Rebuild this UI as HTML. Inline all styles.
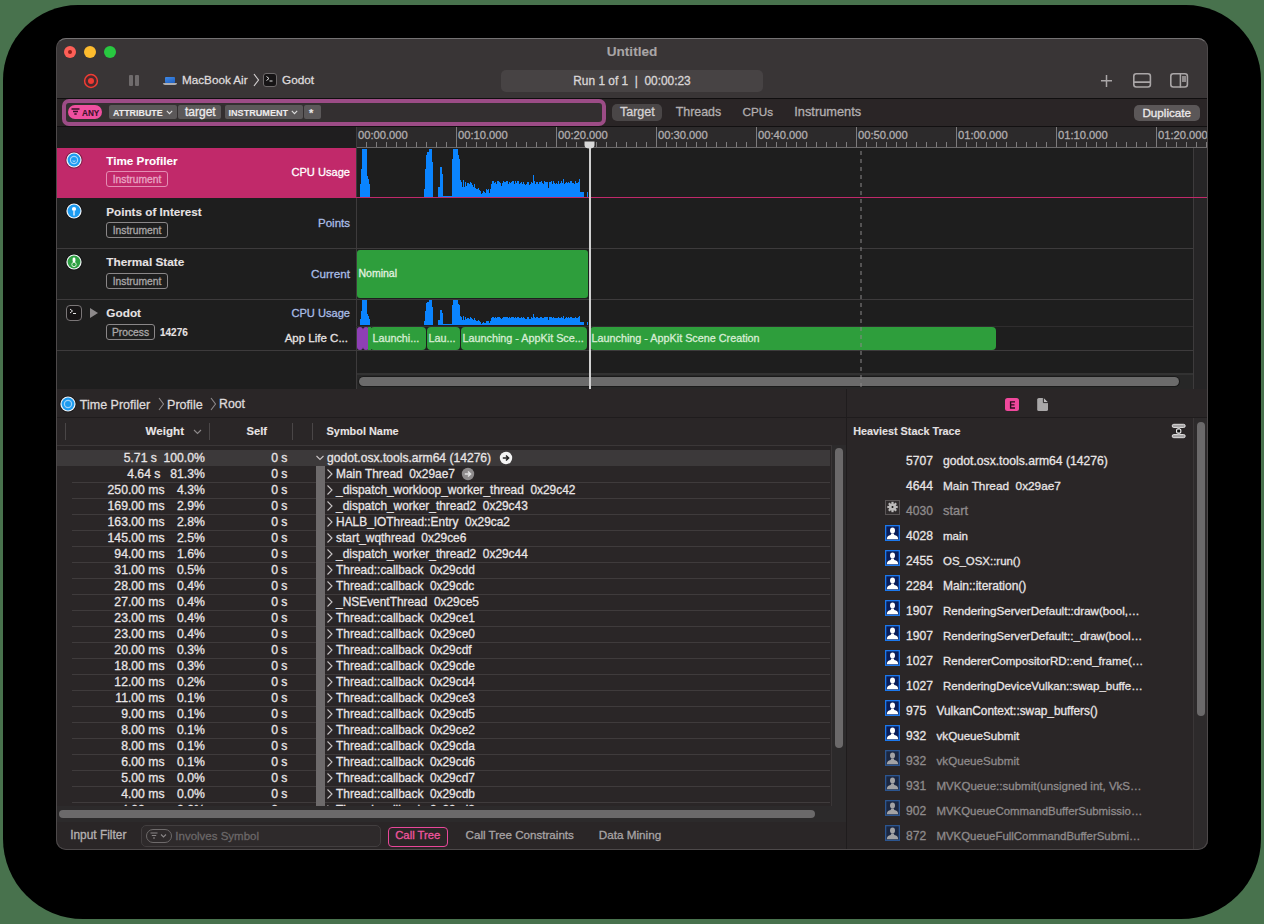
<!DOCTYPE html>
<html><head><meta charset="utf-8"><style>
html,body{margin:0;padding:0;}
body{width:1264px;height:924px;background:#48724d;position:relative;overflow:hidden;font-family:"Liberation Sans",sans-serif;}
.a{position:absolute;}
.t{white-space:pre;-webkit-text-stroke:0.3px currentColor;}
#shadow{position:absolute;left:3px;top:5px;width:1258px;height:914px;border-radius:75px 75px 80px 80px;background:#000;}
#win{position:absolute;left:56px;top:38px;width:1152px;height:812px;border-radius:10px;overflow:hidden;background:#2a2627;}
#winb{position:absolute;left:56px;top:38px;width:1152px;height:812px;border-radius:10px;box-sizing:border-box;border:1px solid #4d494a;border-top-color:#747273;pointer-events:none;}
</style></head><body>
<div id="shadow"></div>
<div id="win">
<div class="a" style="left:1px;top:0px;width:1151px;height:60px;background:#393536"></div>
<div class="a" style="left:1px;top:60px;width:1151px;height:1px;background:#100e0f"></div>
<div class="a" style="left:8px;top:8px;width:12px;height:12px;background:#fe5f57;border-radius:50%"></div>
<div class="a" style="left:28px;top:8px;width:12px;height:12px;background:#febc2e;border-radius:50%"></div>
<div class="a" style="left:48px;top:8px;width:12px;height:12px;background:#28c840;border-radius:50%"></div>
<div class="a" style="left:12px;top:12px;width:4px;height:4px;background:#8f1e18;border-radius:50%"></div>
<div class="a t" style="left:276px;width:600px;text-align:center;top:5.0px;font-size:13.6px;line-height:17px;color:#a9a5a6;font-weight:bold;-webkit-text-stroke:0.1px currentColor;">Untitled</div>
<svg class="a" style="left:27px;top:34.5px" width="16" height="16"><circle cx="8" cy="8" r="6.4" fill="#4a2a2e" stroke="#f03c34" stroke-width="1.5"/><circle cx="8" cy="8" r="3" fill="#ee3a33"/></svg>
<div class="a" style="left:73px;top:37px;width:4px;height:11px;background:#6f6b6c;border-radius:1px"></div>
<div class="a" style="left:79px;top:37px;width:4px;height:11px;background:#6f6b6c;border-radius:1px"></div>
<div class="a" style="left:108.80000000000001px;top:38.7px;width:10.5px;height:6.3px;background:linear-gradient(160deg,#3f8ae8,#1f5fc0);border-radius:1px"></div>
<div class="a" style="left:107px;top:45.2px;width:14px;height:1.8px;background:#aeacad;border-radius:0 0 2px 2px"></div>
<div class="a t" style="left:126px;top:34.0px;font-size:11.7px;line-height:15px;color:#dedadb;">MacBook Air</div>
<svg class="a" style="left:197px;top:35px" width="7" height="14"><path d="M1 1 L5.5 7 L1 13" stroke="#cfcbcc" stroke-width="1.2" fill="none"/></svg>
<div class="a" style="left:207px;top:35px;width:14px;height:14px;background:#161415;border:1px solid #6d696a;border-radius:3px;box-sizing:border-box"></div>
<svg class="a" style="left:209px;top:37px" width="10" height="10"><path d="M1.5 1.5 L4 3.5 L1.5 5.5" stroke="#ddd" stroke-width="1" fill="none"/><path d="M4.5 6 H7.5" stroke="#ddd" stroke-width="1"/></svg>
<div class="a t" style="left:226px;top:34.5px;font-size:11.8px;line-height:15px;color:#dedadb;">Godot</div>
<div class="a" style="left:445px;top:32px;width:262px;height:22px;background:#474344;border-radius:5px"></div>
<div class="a t" style="left:276px;width:600px;text-align:center;top:35.5px;font-size:11.9px;line-height:15px;color:#d9d5d6;">Run 1 of 1  |  00:00:23</div>
<svg class="a" style="left:1044px;top:36px" width="13" height="14"><path d="M6.5 1 V13 M1 6.7 H12" stroke="#aaa6a7" stroke-width="1.5"/></svg>
<svg class="a" style="left:1076px;top:34px" width="20" height="17"><rect x="1.8" y="1.8" width="16.6" height="13.2" rx="2.5" stroke="#aaa6a7" stroke-width="1.6" fill="none"/><path d="M1.5 10.1 H18.5" stroke="#aaa6a7" stroke-width="1.7"/></svg>
<svg class="a" style="left:1113px;top:34px" width="20" height="17"><rect x="1.8" y="1.8" width="16.6" height="13.2" rx="2.5" stroke="#aaa6a7" stroke-width="1.6" fill="none"/><path d="M11.4 1.5 V15.5" stroke="#aaa6a7" stroke-width="1.5"/><rect x="13" y="4" width="4" height="6" fill="#8e8a8b"/></svg>
<div class="a" style="left:1px;top:61px;width:1151px;height:27px;background:#2a2526"></div>
<div class="a" style="left:6px;top:61px;width:544px;height:27px;background:#332f30;border:4px solid #9c4c86;border-radius:7px;box-sizing:border-box"></div>
<div class="a" style="left:12px;top:67px;width:34px;height:14px;background:#ef4f9f;border-radius:7px"></div>
<svg class="a" style="left:15px;top:70px" width="9" height="8"><path d="M0.5 1 H8.5 M2 3.5 H7 M3.3 6 H5.7" stroke="#3a1228" stroke-width="1.3"/></svg>
<div class="a t" style="left:26px;top:70.5px;font-size:8.2px;line-height:10px;color:#3a1228;font-weight:bold;-webkit-text-stroke:0.1px currentColor;">ANY</div>
<div class="a" style="left:53px;top:67px;width:68px;height:14px;background:#5b5859;border-radius:2px"></div>
<div class="a t" style="left:57px;top:69.5px;font-size:8.9px;line-height:11px;color:#ecebeb;font-weight:bold;-webkit-text-stroke:0.1px currentColor;">ATTRIBUTE</div>
<svg class="a" style="left:110px;top:72px" width="7" height="5"><path d="M0.8 0.8 L3.5 3.6 L6.2 0.8" stroke="#ddd" stroke-width="1.1" fill="none"/></svg>
<div class="a" style="left:122px;top:67px;width:43px;height:14px;background:#5b5859;border-radius:2px"></div>
<div class="a t" style="left:129px;top:66.5px;font-size:12px;line-height:15px;color:#ecebeb;">target</div>
<div class="a" style="left:169px;top:67px;width:78px;height:14px;background:#5b5859;border-radius:2px"></div>
<div class="a t" style="left:172.5px;top:69.5px;font-size:9.1px;line-height:11px;color:#ecebeb;font-weight:bold;-webkit-text-stroke:0.1px currentColor;">INSTRUMENT</div>
<svg class="a" style="left:235px;top:72px" width="7" height="5"><path d="M0.8 0.8 L3.5 3.6 L6.2 0.8" stroke="#ddd" stroke-width="1.1" fill="none"/></svg>
<div class="a" style="left:248px;top:67px;width:17px;height:14px;background:#5b5859;border-radius:2px"></div>
<div class="a t" style="left:253px;top:68.0px;font-size:11px;line-height:14px;color:#ecebeb;font-weight:bold;-webkit-text-stroke:0.1px currentColor;">*</div>
<div class="a" style="left:556px;top:66px;width:50px;height:17px;background:#4a4647;border-radius:5px"></div>
<div class="a t" style="left:564px;top:66.3px;font-size:12.5px;line-height:16px;color:#d6d2d3;">Target</div>
<div class="a t" style="left:619.7px;top:66.3px;font-size:12.4px;line-height:16px;color:#b3afb0;">Threads</div>
<div class="a t" style="left:686.5px;top:66.3px;font-size:11.7px;line-height:15px;color:#b3afb0;">CPUs</div>
<div class="a t" style="left:738.3px;top:65.8px;font-size:12.8px;line-height:16px;color:#b3afb0;">Instruments</div>
<div class="a" style="left:1078px;top:67px;width:66px;height:16px;background:#5b5758;border-radius:5px"></div>
<div class="a t" style="left:1086.4px;top:67.0px;font-size:11.7px;line-height:15px;color:#eeeaeb;">Duplicate</div>
<div class="a" style="left:1px;top:88px;width:1151px;height:1px;background:#121011"></div>
<div class="a" style="left:1px;top:89px;width:299px;height:21px;background:#1f1e1f"></div>
<div class="a" style="left:300px;top:89px;width:851px;height:20px;background:#2c2a2b"></div>
<div class="a" style="left:300px;top:109px;width:851px;height:1px;background:#6c6a6b"></div>
<svg class="a" style="left:300px;top:89px" width="851" height="20"><path d="M0.5 0 V20 M10.5 15 V20 M20.5 15 V20 M30.5 15 V20 M40.5 15 V20 M50.5 15 V20 M60.5 15 V20 M70.5 15 V20 M80.5 15 V20 M90.5 15 V20 M100.5 0 V20 M110.5 15 V20 M120.5 15 V20 M130.5 15 V20 M140.5 15 V20 M150.5 15 V20 M160.5 15 V20 M170.5 15 V20 M180.5 15 V20 M190.5 15 V20 M200.5 0 V20 M210.5 15 V20 M220.5 15 V20 M230.5 15 V20 M240.5 15 V20 M250.5 15 V20 M260.5 15 V20 M270.5 15 V20 M280.5 15 V20 M290.5 15 V20 M300.5 0 V20 M310.5 15 V20 M320.5 15 V20 M330.5 15 V20 M340.5 15 V20 M350.5 15 V20 M360.5 15 V20 M370.5 15 V20 M380.5 15 V20 M390.5 15 V20 M400.5 0 V20 M410.5 15 V20 M420.5 15 V20 M430.5 15 V20 M440.5 15 V20 M450.5 15 V20 M460.5 15 V20 M470.5 15 V20 M480.5 15 V20 M490.5 15 V20 M500.5 0 V20 M510.5 15 V20 M520.5 15 V20 M530.5 15 V20 M540.5 15 V20 M550.5 15 V20 M560.5 15 V20 M570.5 15 V20 M580.5 15 V20 M590.5 15 V20 M600.5 0 V20 M610.5 15 V20 M620.5 15 V20 M630.5 15 V20 M640.5 15 V20 M650.5 15 V20 M660.5 15 V20 M670.5 15 V20 M680.5 15 V20 M690.5 15 V20 M700.5 0 V20 M710.5 15 V20 M720.5 15 V20 M730.5 15 V20 M740.5 15 V20 M750.5 15 V20 M760.5 15 V20 M770.5 15 V20 M780.5 15 V20 M790.5 15 V20 M800.5 0 V20 M810.5 15 V20 M820.5 15 V20 M830.5 15 V20 M840.5 15 V20 M850.5 15 V20" stroke="#7d7b7c" stroke-width="1"/></svg>
<div class="a t" style="left:302px;top:90.0px;font-size:11.2px;line-height:14px;color:#b1adae;">00:00.000</div>
<div class="a t" style="left:402px;top:90.0px;font-size:11.2px;line-height:14px;color:#b1adae;">00:10.000</div>
<div class="a t" style="left:502px;top:90.0px;font-size:11.2px;line-height:14px;color:#b1adae;">00:20.000</div>
<div class="a t" style="left:602px;top:90.0px;font-size:11.2px;line-height:14px;color:#b1adae;">00:30.000</div>
<div class="a t" style="left:702px;top:90.0px;font-size:11.2px;line-height:14px;color:#b1adae;">00:40.000</div>
<div class="a t" style="left:802px;top:90.0px;font-size:11.2px;line-height:14px;color:#b1adae;">00:50.000</div>
<div class="a t" style="left:902px;top:90.0px;font-size:11.2px;line-height:14px;color:#b1adae;">01:00.000</div>
<div class="a t" style="left:1002px;top:90.0px;font-size:11.2px;line-height:14px;color:#b1adae;">01:10.000</div>
<div class="a t" style="left:1102px;top:90.0px;font-size:11.2px;line-height:14px;color:#b1adae;">01:20.000</div>
<div class="a" style="left:1px;top:110px;width:1151px;height:241px;background:#1e1e1e"></div>
<div class="a" style="left:1137px;top:110px;width:14px;height:241px;background:#262526"></div>
<div class="a" style="left:1136.5px;top:110px;width:1px;height:241px;background:#3d3b3c"></div>
<div class="a" style="left:300px;top:89px;width:1px;height:262px;background:#3d3b3c"></div>
<div class="a" style="left:1px;top:110px;width:299px;height:49px;background:#c1296a"></div>
<div class="a" style="left:1px;top:159px;width:1151px;height:1px;background:#c1296a"></div>
<div class="a" style="left:1px;top:210px;width:1136px;height:1px;background:#3d3b3c"></div>
<div class="a" style="left:1px;top:261px;width:1136px;height:1px;background:#3d3b3c"></div>
<div class="a" style="left:1px;top:312px;width:1136px;height:1px;background:#3d3b3c"></div>
<div class="a" style="left:300px;top:287.5px;width:837px;height:1px;background:#2f2d2e"></div>
<svg class="a" style="left:9px;top:112.69999999999999px" width="18" height="18"><circle cx="9" cy="9" r="8.6" fill="#000" opacity="0.35"/><circle cx="9" cy="9" r="7.6" fill="#f2f4f8"/><circle cx="9" cy="9" r="6.4" fill="#1d9bf0"/><circle cx="9" cy="9" r="3.6" fill="none" stroke="#9fd3fa" stroke-width="1.2"/><path d="M7.6 9.8 Q9 11 10.4 9.8" stroke="#cfe9fc" stroke-width="0.9" fill="none"/></svg>
<svg class="a" style="left:9px;top:163.8px" width="18" height="18"><circle cx="9" cy="9" r="8.6" fill="#000" opacity="0.35"/><circle cx="9" cy="9" r="7.6" fill="#f2f4f8"/><circle cx="9" cy="9" r="6.4" fill="#1d9bf0"/><circle cx="9" cy="7" r="2.1" fill="#fff"/><path d="M9 8 V13.5" stroke="#cfe6fb" stroke-width="1.6"/></svg>
<svg class="a" style="left:9px;top:214.60000000000002px" width="18" height="18"><circle cx="9" cy="9" r="8.6" fill="#000" opacity="0.35"/><circle cx="9" cy="9" r="7.6" fill="#f2f4f8"/><circle cx="9" cy="9" r="6.4" fill="#2ea043"/><rect x="7.6" y="4.5" width="2.8" height="5" rx="1.4" fill="#fff"/><circle cx="9" cy="11.5" r="2.2" fill="none" stroke="#d5f0d8" stroke-width="1"/></svg>
<div class="a" style="left:10px;top:267px;width:16px;height:16px;background:#161415;border:1px solid #7a7677;border-radius:4px;box-sizing:border-box"></div>
<svg class="a" style="left:12px;top:269px" width="12" height="12"><path d="M2 2 L4.5 4 L2 6" stroke="#e5e5e5" stroke-width="1" fill="none"/><path d="M5 6.5 H8" stroke="#e5e5e5" stroke-width="1"/></svg>
<svg class="a" style="left:33px;top:269px" width="10" height="12"><path d="M1 1 L9 6 L1 11 Z" fill="#8c898a"/></svg>
<div class="a t" style="left:50.3px;top:114.5px;font-size:11.7px;line-height:15px;color:#ffffff;font-weight:bold;-webkit-text-stroke:0.1px currentColor;">Time Profiler</div>
<div class="a" style="left:50px;top:133px;width:62px;height:16px;border:1px solid #e48db3;border-radius:3px;box-sizing:border-box;background:transparent"></div>
<div class="a t" style="left:-219.0px;width:600px;text-align:center;top:135.0px;font-size:10.3px;line-height:13px;color:#e9a6c4;">Instrument</div>
<div class="a t" style="left:-306px;width:600px;text-align:right;top:127.3px;font-size:11.1px;line-height:14px;color:#ffffff;">CPU Usage</div>
<div class="a t" style="left:50.3px;top:165.5px;font-size:11.7px;line-height:15px;color:#e6e2e3;font-weight:bold;-webkit-text-stroke:0.1px currentColor;">Points of Interest</div>
<div class="a" style="left:50px;top:184px;width:62px;height:16px;border:1px solid #8a8788;border-radius:3px;box-sizing:border-box;background:transparent"></div>
<div class="a t" style="left:-219.0px;width:600px;text-align:center;top:186.0px;font-size:10.3px;line-height:13px;color:#a9a6a7;">Instrument</div>
<div class="a t" style="left:-306px;width:600px;text-align:right;top:178.3px;font-size:11.5px;line-height:14px;color:#a9bde6;">Points</div>
<div class="a t" style="left:50.3px;top:217.0px;font-size:11.8px;line-height:15px;color:#e6e2e3;font-weight:bold;-webkit-text-stroke:0.1px currentColor;">Thermal State</div>
<div class="a" style="left:50px;top:235px;width:62px;height:16px;border:1px solid #8a8788;border-radius:3px;box-sizing:border-box;background:transparent"></div>
<div class="a t" style="left:-219.0px;width:600px;text-align:center;top:237.0px;font-size:10.3px;line-height:13px;color:#a9a6a7;">Instrument</div>
<div class="a t" style="left:-306px;width:600px;text-align:right;top:228.3px;font-size:11.7px;line-height:15px;color:#a9bde6;">Current</div>
<div class="a t" style="left:50.3px;top:267.5px;font-size:11.8px;line-height:15px;color:#e6e2e3;font-weight:bold;-webkit-text-stroke:0.1px currentColor;">Godot</div>
<div class="a" style="left:50px;top:286px;width:49px;height:16px;border:1px solid #8a8788;border-radius:3px;box-sizing:border-box;background:transparent"></div>
<div class="a t" style="left:-225.5px;width:600px;text-align:center;top:288.0px;font-size:10.3px;line-height:13px;color:#a9a6a7;">Process</div>
<div class="a t" style="left:104px;top:288.5px;font-size:10px;line-height:12px;color:#e6e2e3;font-weight:bold;-webkit-text-stroke:0.1px currentColor;">14276</div>
<div class="a t" style="left:-306px;width:600px;text-align:right;top:267.6px;font-size:11.1px;line-height:14px;color:#a9bde6;">CPU Usage</div>
<div class="a t" style="left:-308px;width:600px;text-align:right;top:293.0px;font-size:11.5px;line-height:14px;color:#e6e2e3;">App Life C...</div>
<svg class="a" style="left:0;top:0" width="1151" height="811"><path d="M304.0 159.00 v-12.61 h0.5 v12.61z M304.5 159.00 v-27.64 h0.5 v27.64z M305.0 159.00 v-27.64 h0.5 v27.64z M305.5 159.00 v-48.02 h0.5 v48.02z M306.0 159.00 v-48.02 h0.5 v48.02z M306.5 159.00 v-48.02 h0.5 v48.02z M307.0 159.00 v-48.02 h0.5 v48.02z M307.5 159.00 v-48.02 h0.5 v48.02z M308.0 159.00 v-48.02 h0.5 v48.02z M308.5 159.00 v-48.02 h0.5 v48.02z M309.0 159.00 v-48.02 h0.5 v48.02z M309.5 159.00 v-48.02 h0.5 v48.02z M310.0 159.00 v-48.02 h0.5 v48.02z M310.5 159.00 v-48.02 h0.5 v48.02z M311.0 159.00 v-20.86 h0.5 v20.86z M311.5 159.00 v-20.86 h0.5 v20.86z M312.0 159.00 v-17.95 h0.5 v17.95z M312.5 159.00 v-17.95 h0.5 v17.95z M313.0 159.00 v-12.61 h0.5 v12.61z M313.5 159.00 v-12.61 h0.5 v12.61z M368.0 159.00 v-8.25 h0.5 v8.25z M368.5 159.00 v-8.25 h0.5 v8.25z M369.0 159.00 v-27.64 h0.5 v27.64z M369.5 159.00 v-27.64 h0.5 v27.64z M370.0 159.00 v-42.20 h0.5 v42.20z M370.5 159.00 v-42.20 h0.5 v42.20z M371.0 159.00 v-44.62 h0.5 v44.62z M371.5 159.00 v-44.62 h0.5 v44.62z M372.0 159.00 v-44.62 h0.5 v44.62z M372.5 159.00 v-44.62 h0.5 v44.62z M373.0 159.00 v-48.02 h0.5 v48.02z M373.5 159.00 v-48.02 h0.5 v48.02z M374.0 159.00 v-48.02 h0.5 v48.02z M374.5 159.00 v-48.02 h0.5 v48.02z M375.0 159.00 v-48.02 h0.5 v48.02z M375.5 159.00 v-48.02 h0.5 v48.02z M376.0 159.00 v-35.41 h0.5 v35.41z M376.5 159.00 v-35.41 h0.5 v35.41z M382.0 159.00 v-9.70 h0.5 v9.70z M382.5 159.00 v-9.70 h0.5 v9.70z M383.0 159.00 v-9.70 h0.5 v9.70z M383.5 159.00 v-29.59 h0.5 v29.59z M384.0 159.00 v-29.59 h0.5 v29.59z M384.5 159.00 v-29.59 h0.5 v29.59z M385.0 159.00 v-29.59 h0.5 v29.59z M385.5 159.00 v-22.79 h0.5 v22.79z M386.0 159.00 v-22.79 h0.5 v22.79z M386.5 159.00 v-1.45 h0.5 v1.45z M387.0 159.00 v-1.45 h0.5 v1.45z M387.5 159.00 v-1.45 h0.5 v1.45z M388.0 159.00 v-1.45 h0.5 v1.45z M388.5 159.00 v-1.45 h0.5 v1.45z M389.0 159.00 v-1.45 h0.5 v1.45z M389.5 159.00 v-1.45 h0.5 v1.45z M390.0 159.00 v-1.45 h0.5 v1.45z M390.5 159.00 v-1.45 h0.5 v1.45z M391.0 159.00 v-1.45 h0.5 v1.45z M391.5 159.00 v-1.45 h0.5 v1.45z M392.0 159.00 v-1.45 h0.5 v1.45z M392.5 159.00 v-1.45 h0.5 v1.45z M393.0 159.00 v-1.45 h0.5 v1.45z M393.5 159.00 v-1.45 h0.5 v1.45z M394.0 159.00 v-1.45 h0.5 v1.45z M394.5 159.00 v-1.45 h0.5 v1.45z M395.0 159.00 v-1.45 h0.5 v1.45z M395.5 159.00 v-38.32 h0.5 v38.32z M396.0 159.00 v-38.32 h0.5 v38.32z M396.5 159.00 v-38.32 h0.5 v38.32z M397.0 159.00 v-48.50 h0.5 v48.50z M397.5 159.00 v-48.50 h0.5 v48.50z M398.0 159.00 v-48.50 h0.5 v48.50z M398.5 159.00 v-48.50 h0.5 v48.50z M399.0 159.00 v-48.50 h0.5 v48.50z M399.5 159.00 v-48.50 h0.5 v48.50z M400.0 159.00 v-48.50 h0.5 v48.50z M400.5 159.00 v-48.50 h0.5 v48.50z M401.0 159.00 v-48.50 h0.5 v48.50z M401.5 159.00 v-48.50 h0.5 v48.50z M402.0 159.00 v-41.71 h0.5 v41.71z M402.5 159.00 v-41.71 h0.5 v41.71z M403.0 159.00 v-38.32 h0.5 v38.32z M403.5 159.00 v-38.32 h0.5 v38.32z M404.0 159.00 v-16.97 h0.5 v16.97z M404.5 159.00 v-16.97 h0.5 v16.97z M405.0 159.00 v-15.32 h0.5 v15.32z M405.5 159.00 v-14.35 h0.5 v14.35z M406.0 159.00 v-10.39 h0.5 v10.39z M406.5 159.00 v-14.34 h0.5 v14.34z M407.0 159.00 v-17.27 h0.5 v17.27z M407.5 159.00 v-16.50 h0.5 v16.50z M408.0 159.00 v-10.26 h0.5 v10.26z M408.5 159.00 v-15.19 h0.5 v15.19z M409.0 159.00 v-15.26 h0.5 v15.26z M409.5 159.00 v-16.32 h0.5 v16.32z M410.0 159.00 v-11.13 h0.5 v11.13z M410.5 159.00 v-14.76 h0.5 v14.76z M411.0 159.00 v-14.40 h0.5 v14.40z M411.5 159.00 v-15.21 h0.5 v15.21z M412.0 159.00 v-14.35 h0.5 v14.35z M412.5 159.00 v-14.96 h0.5 v14.96z M413.0 159.00 v-12.58 h0.5 v12.58z M413.5 159.00 v-8.02 h0.5 v8.02z M414.0 159.00 v-15.09 h0.5 v15.09z M414.5 159.00 v-13.34 h0.5 v13.34z M415.0 159.00 v-14.37 h0.5 v14.37z M415.5 159.00 v-15.79 h0.5 v15.79z M416.0 159.00 v-12.36 h0.5 v12.36z M416.5 159.00 v-15.98 h0.5 v15.98z M417.0 159.00 v-9.63 h0.5 v9.63z M417.5 159.00 v-7.74 h0.5 v7.74z M418.0 159.00 v-12.63 h0.5 v12.63z M418.5 159.00 v-10.17 h0.5 v10.17z M419.0 159.00 v-8.92 h0.5 v8.92z M419.5 159.00 v-10.14 h0.5 v10.14z M420.0 159.00 v-8.18 h0.5 v8.18z M420.5 159.00 v-7.38 h0.5 v7.38z M421.0 159.00 v-7.70 h0.5 v7.70z M421.5 159.00 v-10.08 h0.5 v10.08z M422.0 159.00 v-8.99 h0.5 v8.99z M422.5 159.00 v-8.79 h0.5 v8.79z M423.0 159.00 v-7.00 h0.5 v7.00z M423.5 159.00 v-10.18 h0.5 v10.18z M424.0 159.00 v-5.91 h0.5 v5.91z M424.5 159.00 v-4.61 h0.5 v4.61z M425.0 159.00 v-2.57 h0.5 v2.57z M425.5 159.00 v-4.95 h0.5 v4.95z M426.0 159.00 v-4.46 h0.5 v4.46z M426.5 159.00 v-4.94 h0.5 v4.94z M427.0 159.00 v-5.78 h0.5 v5.78z M427.5 159.00 v-8.22 h0.5 v8.22z M428.0 159.00 v-4.70 h0.5 v4.70z M428.5 159.00 v-5.39 h0.5 v5.39z M429.0 159.00 v-4.45 h0.5 v4.45z M429.5 159.00 v-2.43 h0.5 v2.43z M430.0 159.00 v-8.16 h0.5 v8.16z M430.5 159.00 v-5.38 h0.5 v5.38z M431.0 159.00 v-7.36 h0.5 v7.36z M431.5 159.00 v-5.64 h0.5 v5.64z M432.0 159.00 v-8.19 h0.5 v8.19z M432.5 159.00 v-7.54 h0.5 v7.54z M433.0 159.00 v-3.85 h0.5 v3.85z M433.5 159.00 v-5.45 h0.5 v5.45z M434.0 159.00 v-8.08 h0.5 v8.08z M434.5 159.00 v-16.44 h0.5 v16.44z M435.0 159.00 v-13.47 h0.5 v13.47z M435.5 159.00 v-13.40 h0.5 v13.40z M436.0 159.00 v-15.87 h0.5 v15.87z M436.5 159.00 v-15.71 h0.5 v15.71z M437.0 159.00 v-16.14 h0.5 v16.14z M437.5 159.00 v-14.46 h0.5 v14.46z M438.0 159.00 v-13.90 h0.5 v13.90z M438.5 159.00 v-14.15 h0.5 v14.15z M439.0 159.00 v-15.42 h0.5 v15.42z M439.5 159.00 v-13.20 h0.5 v13.20z M440.0 159.00 v-13.18 h0.5 v13.18z M440.5 159.00 v-15.16 h0.5 v15.16z M441.0 159.00 v-16.46 h0.5 v16.46z M441.5 159.00 v-14.65 h0.5 v14.65z M442.0 159.00 v-15.99 h0.5 v15.99z M442.5 159.00 v-13.59 h0.5 v13.59z M443.0 159.00 v-14.89 h0.5 v14.89z M443.5 159.00 v-13.12 h0.5 v13.12z M444.0 159.00 v-14.39 h0.5 v14.39z M444.5 159.00 v-14.24 h0.5 v14.24z M445.0 159.00 v-10.75 h0.5 v10.75z M445.5 159.00 v-16.33 h0.5 v16.33z M446.0 159.00 v-14.45 h0.5 v14.45z M446.5 159.00 v-13.87 h0.5 v13.87z M447.0 159.00 v-15.65 h0.5 v15.65z M447.5 159.00 v-13.57 h0.5 v13.57z M448.0 159.00 v-14.58 h0.5 v14.58z M448.5 159.00 v-16.15 h0.5 v16.15z M449.0 159.00 v-14.57 h0.5 v14.57z M449.5 159.00 v-14.37 h0.5 v14.37z M450.0 159.00 v-16.26 h0.5 v16.26z M450.5 159.00 v-16.27 h0.5 v16.27z M451.0 159.00 v-16.27 h0.5 v16.27z M451.5 159.00 v-9.84 h0.5 v9.84z M452.0 159.00 v-12.89 h0.5 v12.89z M452.5 159.00 v-16.09 h0.5 v16.09z M453.0 159.00 v-15.17 h0.5 v15.17z M453.5 159.00 v-16.36 h0.5 v16.36z M454.0 159.00 v-14.16 h0.5 v14.16z M454.5 159.00 v-15.84 h0.5 v15.84z M455.0 159.00 v-14.61 h0.5 v14.61z M455.5 159.00 v-9.54 h0.5 v9.54z M456.0 159.00 v-16.42 h0.5 v16.42z M456.5 159.00 v-14.60 h0.5 v14.60z M457.0 159.00 v-15.67 h0.5 v15.67z M457.5 159.00 v-16.61 h0.5 v16.61z M458.0 159.00 v-13.11 h0.5 v13.11z M458.5 159.00 v-15.79 h0.5 v15.79z M459.0 159.00 v-16.18 h0.5 v16.18z M459.5 159.00 v-12.96 h0.5 v12.96z M460.0 159.00 v-14.26 h0.5 v14.26z M460.5 159.00 v-15.07 h0.5 v15.07z M461.0 159.00 v-15.93 h0.5 v15.93z M461.5 159.00 v-14.37 h0.5 v14.37z M462.0 159.00 v-16.21 h0.5 v16.21z M462.5 159.00 v-14.65 h0.5 v14.65z M463.0 159.00 v-13.24 h0.5 v13.24z M463.5 159.00 v-13.82 h0.5 v13.82z M464.0 159.00 v-13.74 h0.5 v13.74z M464.5 159.00 v-10.98 h0.5 v10.98z M465.0 159.00 v-14.75 h0.5 v14.75z M465.5 159.00 v-15.27 h0.5 v15.27z M466.0 159.00 v-13.32 h0.5 v13.32z M466.5 159.00 v-13.17 h0.5 v13.17z M467.0 159.00 v-15.45 h0.5 v15.45z M467.5 159.00 v-14.38 h0.5 v14.38z M468.0 159.00 v-12.99 h0.5 v12.99z M468.5 159.00 v-11.91 h0.5 v11.91z M469.0 159.00 v-12.27 h0.5 v12.27z M469.5 159.00 v-15.02 h0.5 v15.02z M470.0 159.00 v-12.58 h0.5 v12.58z M470.5 159.00 v-12.25 h0.5 v12.25z M471.0 159.00 v-15.37 h0.5 v15.37z M471.5 159.00 v-12.59 h0.5 v12.59z M472.0 159.00 v-15.22 h0.5 v15.22z M472.5 159.00 v-13.59 h0.5 v13.59z M473.0 159.00 v-11.66 h0.5 v11.66z M473.5 159.00 v-9.73 h0.5 v9.73z M474.0 159.00 v-12.54 h0.5 v12.54z M474.5 159.00 v-14.55 h0.5 v14.55z M475.0 159.00 v-15.05 h0.5 v15.05z M475.5 159.00 v-15.46 h0.5 v15.46z M476.0 159.00 v-14.14 h0.5 v14.14z M476.5 159.00 v-21.89 h0.5 v21.89z M477.0 159.00 v-21.58 h0.5 v21.58z M477.5 159.00 v-20.39 h0.5 v20.39z M478.0 159.00 v-15.82 h0.5 v15.82z M478.5 159.00 v-15.26 h0.5 v15.26z M479.0 159.00 v-12.73 h0.5 v12.73z M479.5 159.00 v-13.02 h0.5 v13.02z M480.0 159.00 v-15.05 h0.5 v15.05z M480.5 159.00 v-17.51 h0.5 v17.51z M481.0 159.00 v-14.56 h0.5 v14.56z M481.5 159.00 v-12.87 h0.5 v12.87z M482.0 159.00 v-12.90 h0.5 v12.90z M482.5 159.00 v-13.41 h0.5 v13.41z M483.0 159.00 v-14.53 h0.5 v14.53z M483.5 159.00 v-15.26 h0.5 v15.26z M484.0 159.00 v-15.10 h0.5 v15.10z M484.5 159.00 v-13.60 h0.5 v13.60z M485.0 159.00 v-16.39 h0.5 v16.39z M485.5 159.00 v-15.22 h0.5 v15.22z M486.0 159.00 v-13.74 h0.5 v13.74z M486.5 159.00 v-14.42 h0.5 v14.42z M487.0 159.00 v-13.38 h0.5 v13.38z M487.5 159.00 v-12.68 h0.5 v12.68z M488.0 159.00 v-16.37 h0.5 v16.37z M488.5 159.00 v-13.42 h0.5 v13.42z M489.0 159.00 v-14.87 h0.5 v14.87z M489.5 159.00 v-16.31 h0.5 v16.31z M490.0 159.00 v-14.58 h0.5 v14.58z M490.5 159.00 v-13.51 h0.5 v13.51z M491.0 159.00 v-15.12 h0.5 v15.12z M491.5 159.00 v-13.78 h0.5 v13.78z M492.0 159.00 v-8.86 h0.5 v8.86z M492.5 159.00 v-15.87 h0.5 v15.87z M493.0 159.00 v-15.38 h0.5 v15.38z M493.5 159.00 v-14.05 h0.5 v14.05z M494.0 159.00 v-14.90 h0.5 v14.90z M494.5 159.00 v-13.68 h0.5 v13.68z M495.0 159.00 v-15.85 h0.5 v15.85z M495.5 159.00 v-13.58 h0.5 v13.58z M496.0 159.00 v-13.35 h0.5 v13.35z M496.5 159.00 v-16.04 h0.5 v16.04z M497.0 159.00 v-16.15 h0.5 v16.15z M497.5 159.00 v-15.40 h0.5 v15.40z M498.0 159.00 v-14.36 h0.5 v14.36z M498.5 159.00 v-13.72 h0.5 v13.72z M499.0 159.00 v-13.10 h0.5 v13.10z M499.5 159.00 v-13.77 h0.5 v13.77z M500.0 159.00 v-13.62 h0.5 v13.62z M500.5 159.00 v-14.77 h0.5 v14.77z M501.0 159.00 v-13.24 h0.5 v13.24z M501.5 159.00 v-14.54 h0.5 v14.54z M502.0 159.00 v-16.48 h0.5 v16.48z M502.5 159.00 v-13.36 h0.5 v13.36z M503.0 159.00 v-12.96 h0.5 v12.96z M503.5 159.00 v-14.82 h0.5 v14.82z M504.0 159.00 v-14.21 h0.5 v14.21z M504.5 159.00 v-10.71 h0.5 v10.71z M505.0 159.00 v-16.36 h0.5 v16.36z M505.5 159.00 v-15.05 h0.5 v15.05z M506.0 159.00 v-13.66 h0.5 v13.66z M506.5 159.00 v-14.34 h0.5 v14.34z M507.0 159.00 v-17.51 h0.5 v17.51z M507.5 159.00 v-16.09 h0.5 v16.09z M508.0 159.00 v-12.61 h0.5 v12.61z M508.5 159.00 v-15.81 h0.5 v15.81z M509.0 159.00 v-13.57 h0.5 v13.57z M509.5 159.00 v-14.64 h0.5 v14.64z M510.0 159.00 v-15.41 h0.5 v15.41z M510.5 159.00 v-9.30 h0.5 v9.30z M511.0 159.00 v-13.51 h0.5 v13.51z M511.5 159.00 v-13.79 h0.5 v13.79z M512.0 159.00 v-15.08 h0.5 v15.08z M512.5 159.00 v-12.88 h0.5 v12.88z M513.0 159.00 v-14.12 h0.5 v14.12z M513.5 159.00 v-12.65 h0.5 v12.65z M514.0 159.00 v-16.33 h0.5 v16.33z M514.5 159.00 v-14.45 h0.5 v14.45z M515.0 159.00 v-16.34 h0.5 v16.34z M515.5 159.00 v-12.69 h0.5 v12.69z M516.0 159.00 v-14.24 h0.5 v14.24z M516.5 159.00 v-12.63 h0.5 v12.63z M517.0 159.00 v-14.24 h0.5 v14.24z M517.5 159.00 v-15.70 h0.5 v15.70z M518.0 159.00 v-13.41 h0.5 v13.41z M518.5 159.00 v-15.79 h0.5 v15.79z M519.0 159.00 v-15.56 h0.5 v15.56z M519.5 159.00 v-14.53 h0.5 v14.53z M520.0 159.00 v-14.23 h0.5 v14.23z M520.5 159.00 v-13.18 h0.5 v13.18z M521.0 159.00 v-13.76 h0.5 v13.76z M521.5 159.00 v-14.14 h0.5 v14.14z M522.0 159.00 v-15.45 h0.5 v15.45z M522.5 159.00 v-13.89 h0.5 v13.89z M523.0 159.00 v-18.25 h0.5 v18.25z M523.5 159.00 v-5.33 h0.5 v5.33z M524.0 159.00 v-5.33 h0.5 v5.33z M524.5 159.00 v-5.33 h0.5 v5.33z M525.0 159.00 v-5.33 h0.5 v5.33z M525.5 159.00 v-5.33 h0.5 v5.33z M526.0 159.00 v-5.33 h0.5 v5.33z M526.5 159.00 v-5.33 h0.5 v5.33z M527.0 159.00 v-5.33 h0.5 v5.33z M527.5 159.00 v-5.33 h0.5 v5.33z M530.5 159.00 v-5.33 h0.5 v5.33z M531.0 159.00 v-5.33 h0.5 v5.33z M531.5 159.00 v-5.33 h0.5 v5.33z" fill="#0a84ff" stroke="none" shape-rendering="crispEdges"/></svg>
<svg class="a" style="left:0;top:0" width="1151" height="811"><path d="M304.0 287.00 v-6.50 h0.5 v6.50z M304.5 287.00 v-14.25 h0.5 v14.25z M305.0 287.00 v-14.25 h0.5 v14.25z M305.5 287.00 v-24.75 h0.5 v24.75z M306.0 287.00 v-24.75 h0.5 v24.75z M306.5 287.00 v-24.75 h0.5 v24.75z M307.0 287.00 v-24.75 h0.5 v24.75z M307.5 287.00 v-24.75 h0.5 v24.75z M308.0 287.00 v-24.75 h0.5 v24.75z M308.5 287.00 v-24.75 h0.5 v24.75z M309.0 287.00 v-24.75 h0.5 v24.75z M309.5 287.00 v-24.75 h0.5 v24.75z M310.0 287.00 v-24.75 h0.5 v24.75z M310.5 287.00 v-24.75 h0.5 v24.75z M311.0 287.00 v-10.75 h0.5 v10.75z M311.5 287.00 v-10.75 h0.5 v10.75z M312.0 287.00 v-9.25 h0.5 v9.25z M312.5 287.00 v-9.25 h0.5 v9.25z M313.0 287.00 v-6.50 h0.5 v6.50z M313.5 287.00 v-6.50 h0.5 v6.50z M368.0 287.00 v-4.25 h0.5 v4.25z M368.5 287.00 v-4.25 h0.5 v4.25z M369.0 287.00 v-14.25 h0.5 v14.25z M369.5 287.00 v-14.25 h0.5 v14.25z M370.0 287.00 v-21.75 h0.5 v21.75z M370.5 287.00 v-21.75 h0.5 v21.75z M371.0 287.00 v-23.00 h0.5 v23.00z M371.5 287.00 v-23.00 h0.5 v23.00z M372.0 287.00 v-23.00 h0.5 v23.00z M372.5 287.00 v-23.00 h0.5 v23.00z M373.0 287.00 v-24.75 h0.5 v24.75z M373.5 287.00 v-24.75 h0.5 v24.75z M374.0 287.00 v-24.75 h0.5 v24.75z M374.5 287.00 v-24.75 h0.5 v24.75z M375.0 287.00 v-24.75 h0.5 v24.75z M375.5 287.00 v-24.75 h0.5 v24.75z M376.0 287.00 v-18.25 h0.5 v18.25z M376.5 287.00 v-18.25 h0.5 v18.25z M382.0 287.00 v-5.00 h0.5 v5.00z M382.5 287.00 v-5.00 h0.5 v5.00z M383.0 287.00 v-5.00 h0.5 v5.00z M383.5 287.00 v-15.25 h0.5 v15.25z M384.0 287.00 v-15.25 h0.5 v15.25z M384.5 287.00 v-15.25 h0.5 v15.25z M385.0 287.00 v-15.25 h0.5 v15.25z M385.5 287.00 v-11.75 h0.5 v11.75z M386.0 287.00 v-11.75 h0.5 v11.75z M386.5 287.00 v-0.75 h0.5 v0.75z M387.0 287.00 v-0.75 h0.5 v0.75z M387.5 287.00 v-0.75 h0.5 v0.75z M388.0 287.00 v-0.75 h0.5 v0.75z M388.5 287.00 v-0.75 h0.5 v0.75z M389.0 287.00 v-0.75 h0.5 v0.75z M389.5 287.00 v-0.75 h0.5 v0.75z M390.0 287.00 v-0.75 h0.5 v0.75z M390.5 287.00 v-0.75 h0.5 v0.75z M391.0 287.00 v-0.75 h0.5 v0.75z M391.5 287.00 v-0.75 h0.5 v0.75z M392.0 287.00 v-0.75 h0.5 v0.75z M392.5 287.00 v-0.75 h0.5 v0.75z M393.0 287.00 v-0.75 h0.5 v0.75z M393.5 287.00 v-0.75 h0.5 v0.75z M394.0 287.00 v-0.75 h0.5 v0.75z M394.5 287.00 v-0.75 h0.5 v0.75z M395.0 287.00 v-0.75 h0.5 v0.75z M395.5 287.00 v-19.75 h0.5 v19.75z M396.0 287.00 v-19.75 h0.5 v19.75z M396.5 287.00 v-19.75 h0.5 v19.75z M397.0 287.00 v-25.00 h0.5 v25.00z M397.5 287.00 v-25.00 h0.5 v25.00z M398.0 287.00 v-25.00 h0.5 v25.00z M398.5 287.00 v-25.00 h0.5 v25.00z M399.0 287.00 v-25.00 h0.5 v25.00z M399.5 287.00 v-25.00 h0.5 v25.00z M400.0 287.00 v-25.00 h0.5 v25.00z M400.5 287.00 v-25.00 h0.5 v25.00z M401.0 287.00 v-25.00 h0.5 v25.00z M401.5 287.00 v-25.00 h0.5 v25.00z M402.0 287.00 v-21.50 h0.5 v21.50z M402.5 287.00 v-21.50 h0.5 v21.50z M403.0 287.00 v-19.75 h0.5 v19.75z M403.5 287.00 v-19.75 h0.5 v19.75z M404.0 287.00 v-8.75 h0.5 v8.75z M404.5 287.00 v-8.75 h0.5 v8.75z M405.0 287.00 v-7.90 h0.5 v7.90z M405.5 287.00 v-7.39 h0.5 v7.39z M406.0 287.00 v-5.36 h0.5 v5.36z M406.5 287.00 v-7.39 h0.5 v7.39z M407.0 287.00 v-8.90 h0.5 v8.90z M407.5 287.00 v-8.50 h0.5 v8.50z M408.0 287.00 v-5.29 h0.5 v5.29z M408.5 287.00 v-7.83 h0.5 v7.83z M409.0 287.00 v-7.87 h0.5 v7.87z M409.5 287.00 v-8.41 h0.5 v8.41z M410.0 287.00 v-5.74 h0.5 v5.74z M410.5 287.00 v-7.61 h0.5 v7.61z M411.0 287.00 v-7.42 h0.5 v7.42z M411.5 287.00 v-7.84 h0.5 v7.84z M412.0 287.00 v-7.40 h0.5 v7.40z M412.5 287.00 v-7.71 h0.5 v7.71z M413.0 287.00 v-6.49 h0.5 v6.49z M413.5 287.00 v-4.13 h0.5 v4.13z M414.0 287.00 v-7.78 h0.5 v7.78z M414.5 287.00 v-6.88 h0.5 v6.88z M415.0 287.00 v-7.41 h0.5 v7.41z M415.5 287.00 v-8.14 h0.5 v8.14z M416.0 287.00 v-6.37 h0.5 v6.37z M416.5 287.00 v-8.24 h0.5 v8.24z M417.0 287.00 v-4.96 h0.5 v4.96z M417.5 287.00 v-3.99 h0.5 v3.99z M418.0 287.00 v-6.51 h0.5 v6.51z M418.5 287.00 v-5.24 h0.5 v5.24z M419.0 287.00 v-4.60 h0.5 v4.60z M419.5 287.00 v-5.23 h0.5 v5.23z M420.0 287.00 v-4.22 h0.5 v4.22z M420.5 287.00 v-3.80 h0.5 v3.80z M421.0 287.00 v-3.97 h0.5 v3.97z M421.5 287.00 v-5.19 h0.5 v5.19z M422.0 287.00 v-4.63 h0.5 v4.63z M422.5 287.00 v-4.53 h0.5 v4.53z M423.0 287.00 v-3.61 h0.5 v3.61z M423.5 287.00 v-5.25 h0.5 v5.25z M424.0 287.00 v-3.05 h0.5 v3.05z M424.5 287.00 v-2.37 h0.5 v2.37z M425.0 287.00 v-1.32 h0.5 v1.32z M425.5 287.00 v-2.55 h0.5 v2.55z M426.0 287.00 v-2.30 h0.5 v2.30z M426.5 287.00 v-2.55 h0.5 v2.55z M427.0 287.00 v-2.98 h0.5 v2.98z M427.5 287.00 v-4.24 h0.5 v4.24z M428.0 287.00 v-2.42 h0.5 v2.42z M428.5 287.00 v-2.78 h0.5 v2.78z M429.0 287.00 v-2.30 h0.5 v2.30z M429.5 287.00 v-1.25 h0.5 v1.25z M430.0 287.00 v-4.21 h0.5 v4.21z M430.5 287.00 v-2.77 h0.5 v2.77z M431.0 287.00 v-3.79 h0.5 v3.79z M431.5 287.00 v-2.91 h0.5 v2.91z M432.0 287.00 v-4.22 h0.5 v4.22z M432.5 287.00 v-3.89 h0.5 v3.89z M433.0 287.00 v-1.99 h0.5 v1.99z M433.5 287.00 v-2.81 h0.5 v2.81z M434.0 287.00 v-4.16 h0.5 v4.16z M434.5 287.00 v-8.48 h0.5 v8.48z M435.0 287.00 v-6.94 h0.5 v6.94z M435.5 287.00 v-6.91 h0.5 v6.91z M436.0 287.00 v-8.18 h0.5 v8.18z M436.5 287.00 v-8.10 h0.5 v8.10z M437.0 287.00 v-8.32 h0.5 v8.32z M437.5 287.00 v-7.46 h0.5 v7.46z M438.0 287.00 v-7.17 h0.5 v7.17z M438.5 287.00 v-7.29 h0.5 v7.29z M439.0 287.00 v-7.95 h0.5 v7.95z M439.5 287.00 v-6.80 h0.5 v6.80z M440.0 287.00 v-6.79 h0.5 v6.79z M440.5 287.00 v-7.81 h0.5 v7.81z M441.0 287.00 v-8.48 h0.5 v8.48z M441.5 287.00 v-7.55 h0.5 v7.55z M442.0 287.00 v-8.24 h0.5 v8.24z M442.5 287.00 v-7.00 h0.5 v7.00z M443.0 287.00 v-7.67 h0.5 v7.67z M443.5 287.00 v-6.76 h0.5 v6.76z M444.0 287.00 v-7.42 h0.5 v7.42z M444.5 287.00 v-7.34 h0.5 v7.34z M445.0 287.00 v-5.54 h0.5 v5.54z M445.5 287.00 v-8.42 h0.5 v8.42z M446.0 287.00 v-7.45 h0.5 v7.45z M446.5 287.00 v-7.15 h0.5 v7.15z M447.0 287.00 v-8.07 h0.5 v8.07z M447.5 287.00 v-7.00 h0.5 v7.00z M448.0 287.00 v-7.52 h0.5 v7.52z M448.5 287.00 v-8.32 h0.5 v8.32z M449.0 287.00 v-7.51 h0.5 v7.51z M449.5 287.00 v-7.40 h0.5 v7.40z M450.0 287.00 v-8.38 h0.5 v8.38z M450.5 287.00 v-8.38 h0.5 v8.38z M451.0 287.00 v-8.39 h0.5 v8.39z M451.5 287.00 v-5.07 h0.5 v5.07z M452.0 287.00 v-6.65 h0.5 v6.65z M452.5 287.00 v-8.29 h0.5 v8.29z M453.0 287.00 v-7.82 h0.5 v7.82z M453.5 287.00 v-8.44 h0.5 v8.44z M454.0 287.00 v-7.30 h0.5 v7.30z M454.5 287.00 v-8.16 h0.5 v8.16z M455.0 287.00 v-7.53 h0.5 v7.53z M455.5 287.00 v-4.92 h0.5 v4.92z M456.0 287.00 v-8.46 h0.5 v8.46z M456.5 287.00 v-7.52 h0.5 v7.52z M457.0 287.00 v-8.08 h0.5 v8.08z M457.5 287.00 v-8.56 h0.5 v8.56z M458.0 287.00 v-6.76 h0.5 v6.76z M458.5 287.00 v-8.14 h0.5 v8.14z M459.0 287.00 v-8.34 h0.5 v8.34z M459.5 287.00 v-6.68 h0.5 v6.68z M460.0 287.00 v-7.35 h0.5 v7.35z M460.5 287.00 v-7.77 h0.5 v7.77z M461.0 287.00 v-8.21 h0.5 v8.21z M461.5 287.00 v-7.41 h0.5 v7.41z M462.0 287.00 v-8.35 h0.5 v8.35z M462.5 287.00 v-7.55 h0.5 v7.55z M463.0 287.00 v-6.82 h0.5 v6.82z M463.5 287.00 v-7.12 h0.5 v7.12z M464.0 287.00 v-7.08 h0.5 v7.08z M464.5 287.00 v-5.66 h0.5 v5.66z M465.0 287.00 v-7.60 h0.5 v7.60z M465.5 287.00 v-7.87 h0.5 v7.87z M466.0 287.00 v-6.86 h0.5 v6.86z M466.5 287.00 v-6.79 h0.5 v6.79z M467.0 287.00 v-7.96 h0.5 v7.96z M467.5 287.00 v-7.41 h0.5 v7.41z M468.0 287.00 v-6.70 h0.5 v6.70z M468.5 287.00 v-6.14 h0.5 v6.14z M469.0 287.00 v-6.33 h0.5 v6.33z M469.5 287.00 v-7.74 h0.5 v7.74z M470.0 287.00 v-6.48 h0.5 v6.48z M470.5 287.00 v-6.32 h0.5 v6.32z M471.0 287.00 v-7.92 h0.5 v7.92z M471.5 287.00 v-6.49 h0.5 v6.49z M472.0 287.00 v-7.84 h0.5 v7.84z M472.5 287.00 v-7.01 h0.5 v7.01z M473.0 287.00 v-6.01 h0.5 v6.01z M473.5 287.00 v-5.02 h0.5 v5.02z M474.0 287.00 v-6.47 h0.5 v6.47z M474.5 287.00 v-7.50 h0.5 v7.50z M475.0 287.00 v-7.76 h0.5 v7.76z M475.5 287.00 v-7.97 h0.5 v7.97z M476.0 287.00 v-7.29 h0.5 v7.29z M476.5 287.00 v-11.28 h0.5 v11.28z M477.0 287.00 v-11.12 h0.5 v11.12z M477.5 287.00 v-10.51 h0.5 v10.51z M478.0 287.00 v-8.15 h0.5 v8.15z M478.5 287.00 v-7.87 h0.5 v7.87z M479.0 287.00 v-6.56 h0.5 v6.56z M479.5 287.00 v-6.71 h0.5 v6.71z M480.0 287.00 v-7.76 h0.5 v7.76z M480.5 287.00 v-9.03 h0.5 v9.03z M481.0 287.00 v-7.51 h0.5 v7.51z M481.5 287.00 v-6.63 h0.5 v6.63z M482.0 287.00 v-6.65 h0.5 v6.65z M482.5 287.00 v-6.91 h0.5 v6.91z M483.0 287.00 v-7.49 h0.5 v7.49z M483.5 287.00 v-7.87 h0.5 v7.87z M484.0 287.00 v-7.79 h0.5 v7.79z M484.5 287.00 v-7.01 h0.5 v7.01z M485.0 287.00 v-8.45 h0.5 v8.45z M485.5 287.00 v-7.84 h0.5 v7.84z M486.0 287.00 v-7.08 h0.5 v7.08z M486.5 287.00 v-7.43 h0.5 v7.43z M487.0 287.00 v-6.90 h0.5 v6.90z M487.5 287.00 v-6.54 h0.5 v6.54z M488.0 287.00 v-8.44 h0.5 v8.44z M488.5 287.00 v-6.92 h0.5 v6.92z M489.0 287.00 v-7.66 h0.5 v7.66z M489.5 287.00 v-8.41 h0.5 v8.41z M490.0 287.00 v-7.52 h0.5 v7.52z M490.5 287.00 v-6.96 h0.5 v6.96z M491.0 287.00 v-7.79 h0.5 v7.79z M491.5 287.00 v-7.10 h0.5 v7.10z M492.0 287.00 v-4.57 h0.5 v4.57z M492.5 287.00 v-8.18 h0.5 v8.18z M493.0 287.00 v-7.93 h0.5 v7.93z M493.5 287.00 v-7.24 h0.5 v7.24z M494.0 287.00 v-7.68 h0.5 v7.68z M494.5 287.00 v-7.05 h0.5 v7.05z M495.0 287.00 v-8.17 h0.5 v8.17z M495.5 287.00 v-7.00 h0.5 v7.00z M496.0 287.00 v-6.88 h0.5 v6.88z M496.5 287.00 v-8.27 h0.5 v8.27z M497.0 287.00 v-8.33 h0.5 v8.33z M497.5 287.00 v-7.94 h0.5 v7.94z M498.0 287.00 v-7.40 h0.5 v7.40z M498.5 287.00 v-7.07 h0.5 v7.07z M499.0 287.00 v-6.75 h0.5 v6.75z M499.5 287.00 v-7.10 h0.5 v7.10z M500.0 287.00 v-7.02 h0.5 v7.02z M500.5 287.00 v-7.61 h0.5 v7.61z M501.0 287.00 v-6.82 h0.5 v6.82z M501.5 287.00 v-7.49 h0.5 v7.49z M502.0 287.00 v-8.49 h0.5 v8.49z M502.5 287.00 v-6.88 h0.5 v6.88z M503.0 287.00 v-6.68 h0.5 v6.68z M503.5 287.00 v-7.64 h0.5 v7.64z M504.0 287.00 v-7.33 h0.5 v7.33z M504.5 287.00 v-5.52 h0.5 v5.52z M505.0 287.00 v-8.44 h0.5 v8.44z M505.5 287.00 v-7.76 h0.5 v7.76z M506.0 287.00 v-7.04 h0.5 v7.04z M506.5 287.00 v-7.39 h0.5 v7.39z M507.0 287.00 v-9.03 h0.5 v9.03z M507.5 287.00 v-8.29 h0.5 v8.29z M508.0 287.00 v-6.50 h0.5 v6.50z M508.5 287.00 v-8.15 h0.5 v8.15z M509.0 287.00 v-7.00 h0.5 v7.00z M509.5 287.00 v-7.54 h0.5 v7.54z M510.0 287.00 v-7.94 h0.5 v7.94z M510.5 287.00 v-4.80 h0.5 v4.80z M511.0 287.00 v-6.97 h0.5 v6.97z M511.5 287.00 v-7.11 h0.5 v7.11z M512.0 287.00 v-7.77 h0.5 v7.77z M512.5 287.00 v-6.64 h0.5 v6.64z M513.0 287.00 v-7.28 h0.5 v7.28z M513.5 287.00 v-6.52 h0.5 v6.52z M514.0 287.00 v-8.42 h0.5 v8.42z M514.5 287.00 v-7.45 h0.5 v7.45z M515.0 287.00 v-8.42 h0.5 v8.42z M515.5 287.00 v-6.54 h0.5 v6.54z M516.0 287.00 v-7.34 h0.5 v7.34z M516.5 287.00 v-6.51 h0.5 v6.51z M517.0 287.00 v-7.34 h0.5 v7.34z M517.5 287.00 v-8.09 h0.5 v8.09z M518.0 287.00 v-6.91 h0.5 v6.91z M518.5 287.00 v-8.14 h0.5 v8.14z M519.0 287.00 v-8.02 h0.5 v8.02z M519.5 287.00 v-7.49 h0.5 v7.49z M520.0 287.00 v-7.33 h0.5 v7.33z M520.5 287.00 v-6.79 h0.5 v6.79z M521.0 287.00 v-7.09 h0.5 v7.09z M521.5 287.00 v-7.29 h0.5 v7.29z M522.0 287.00 v-7.97 h0.5 v7.97z M522.5 287.00 v-7.16 h0.5 v7.16z M523.0 287.00 v-9.41 h0.5 v9.41z M523.5 287.00 v-2.75 h0.5 v2.75z M524.0 287.00 v-2.75 h0.5 v2.75z M524.5 287.00 v-2.75 h0.5 v2.75z M525.0 287.00 v-2.75 h0.5 v2.75z M525.5 287.00 v-2.75 h0.5 v2.75z M526.0 287.00 v-2.75 h0.5 v2.75z M526.5 287.00 v-2.75 h0.5 v2.75z M527.0 287.00 v-2.75 h0.5 v2.75z M527.5 287.00 v-2.75 h0.5 v2.75z M530.5 287.00 v-2.75 h0.5 v2.75z M531.0 287.00 v-2.75 h0.5 v2.75z M531.5 287.00 v-2.75 h0.5 v2.75z" fill="#0a84ff" stroke="none" shape-rendering="crispEdges"/></svg>
<div class="a" style="left:301px;top:212px;width:231px;height:48px;background:#2e9e3c;border-radius:3px"></div>
<div class="a t" style="left:302.5px;top:229.0px;font-size:10.5px;line-height:13px;color:#e2f2e0;">Nominal</div>
<div class="a" style="left:301px;top:289px;width:6px;height:23px;background:#8e3fb5;border-radius:3px"></div>
<div class="a" style="left:306.5px;top:289px;width:6px;height:23px;background:#8e3fb5;border-radius:3px"></div>
<div class="a" style="left:312px;top:289px;width:3px;height:23px;background:#2e9e3c"></div>
<div class="a" style="left:314.4px;top:289px;width:55.60000000000002px;height:23px;background:#2e9e3c;border-radius:4px"></div>
<div class="a t" style="left:316.4px;top:293.0px;font-size:10.8px;line-height:14px;color:#d7edd4;">Launchi...</div>
<div class="a" style="left:370.5px;top:289px;width:33.0px;height:23px;background:#2e9e3c;border-radius:4px"></div>
<div class="a t" style="left:372.5px;top:293.0px;font-size:10.8px;line-height:14px;color:#d7edd4;">Lau...</div>
<div class="a" style="left:404.5px;top:289px;width:126.5px;height:23px;background:#2e9e3c;border-radius:4px"></div>
<div class="a t" style="left:406.5px;top:293.0px;font-size:10.8px;line-height:14px;color:#d7edd4;">Launching - AppKit Sce...</div>
<div class="a" style="left:533.5px;top:289px;width:406.5px;height:23px;background:#2e9e3c;border-radius:4px"></div>
<div class="a t" style="left:535.5px;top:293.0px;font-size:10.8px;line-height:14px;color:#d7edd4;">Launching - AppKit Scene Creation</div>
<div class="a" style="left:301px;top:335px;width:836px;height:16px;background:#272727"></div>
<div class="a" style="left:301px;top:335px;width:836px;height:1.5px;background:#323232"></div>
<div class="a" style="left:302.8px;top:338.9px;width:820px;height:9.2px;background:#6b6b6b;border-radius:5px;box-shadow:0 0 0 1px #1a1a1a"></div>
<svg class="a" style="left:804px;top:110px" width="2" height="241"><path d="M1 0 V241" stroke="#8a8889" stroke-width="1" stroke-dasharray="4 4" stroke-dashoffset="5"/></svg>
<div class="a" style="left:532.5px;top:110px;width:2px;height:241px;background:#d0d0d0"></div>
<svg class="a" style="left:528px;top:103px" width="11" height="8"><path d="M0.5 0.5 H10.5 V4 Q10.5 7.5 5.5 7.5 Q0.5 7.5 0.5 4 Z" fill="#d8d8d8"/></svg>
<div class="a" style="left:1px;top:351px;width:1151px;height:28px;background:#2a2627"></div>
<div class="a" style="left:1px;top:379px;width:1151px;height:1px;background:#1f1c1d"></div>
<svg class="a" style="left:3px;top:357px" width="18" height="18"><circle cx="9" cy="9" r="8.6" fill="#000" opacity="0.35"/><circle cx="9" cy="9" r="7.6" fill="#f2f4f8"/><circle cx="9" cy="9" r="6.4" fill="#1d9bf0"/><circle cx="9" cy="9" r="3.6" fill="none" stroke="#9fd3fa" stroke-width="1.2"/></svg>
<div class="a t" style="left:23.799999999999997px;top:358.8px;font-size:12.5px;line-height:16px;color:#dedadb;">Time Profiler</div>
<svg class="a" style="left:102px;top:359px" width="7" height="14"><path d="M1 1 L5.5 7.0 L1 13" stroke="#8d898a" stroke-width="1.1" fill="none"/></svg>
<div class="a t" style="left:111px;top:358.8px;font-size:12.6px;line-height:16px;color:#dedadb;">Profile</div>
<svg class="a" style="left:154px;top:359px" width="7" height="14"><path d="M1 1 L5.5 7.0 L1 13" stroke="#8d898a" stroke-width="1.1" fill="none"/></svg>
<div class="a t" style="left:163px;top:359.3px;font-size:12.3px;line-height:15px;color:#dedadb;">Root</div>
<div class="a" style="left:790px;top:351px;width:1px;height:460px;background:#1f1c1d"></div>
<div class="a" style="left:949px;top:359.7px;width:14px;height:13.5px;background:#f0489c;border-radius:2.5px"></div>
<svg class="a" style="left:949px;top:359.7px" width="14" height="14"><path d="M10 3.9 H5.6 V10 H10 M5.6 6.9 H9.5" stroke="#2a0c1c" stroke-width="1.4" fill="none"/></svg>
<svg class="a" style="left:980px;top:359px" width="13" height="15"><path d="M1.2 2.6 Q1.2 1 2.8 1 H7.6 L12 5.4 V12.4 Q12 14 10.4 14 H2.8 Q1.2 14 1.2 12.4 Z" fill="#a9a7a8"/><path d="M7.4 1 V5.6 H12" fill="#bdbbbc" stroke="#1e1c1d" stroke-width="0.9"/></svg>
<div class="a" style="left:1px;top:380px;width:789px;height:27px;background:#2a2627"></div>
<div class="a" style="left:9px;top:385px;width:1px;height:17px;background:#4a4647"></div>
<div class="a" style="left:152.5px;top:385px;width:1px;height:17px;background:#4a4647"></div>
<div class="a" style="left:235.5px;top:385px;width:1px;height:17px;background:#4a4647"></div>
<div class="a" style="left:255.5px;top:385px;width:1px;height:17px;background:#4a4647"></div>
<div class="a t" style="left:-472px;width:600px;text-align:right;top:386.3px;font-size:11.6px;line-height:14px;color:#e8e4e5;font-weight:bold;-webkit-text-stroke:0.1px currentColor;">Weight</div>
<svg class="a" style="left:137px;top:391px" width="9" height="6"><path d="M1 1 L4.5 4.5 L8 1" stroke="#8d898a" stroke-width="1.1" fill="none"/></svg>
<div class="a t" style="left:190.5px;top:386.3px;font-size:11.2px;line-height:14px;color:#e8e4e5;font-weight:bold;-webkit-text-stroke:0.1px currentColor;">Self</div>
<div class="a t" style="left:270.6px;top:386.3px;font-size:10.9px;line-height:14px;color:#e8e4e5;font-weight:bold;-webkit-text-stroke:0.1px currentColor;">Symbol Name</div>
<div class="a" style="left:1px;top:407px;width:774px;height:1px;background:#3b3738"></div>
<div class="a" style="left:1px;top:408px;width:774px;height:4px;background:#282425"></div>
<div class="a" style="left:0;top:412px;width:774px;height:356px;overflow:hidden">
<div class="a" style="left:1px;top:0px;width:774px;height:16px;background:#3c393a"></div>
<div class="a t" style="left:-499.1px;width:600px;text-align:right;top:1.1px;font-size:12.2px;line-height:15px;color:#e8e4e5;">5.71 s</div>
<div class="a t" style="left:-451.2px;width:600px;text-align:right;top:1.1px;font-size:12.2px;line-height:15px;color:#e8e4e5;">100.0%</div>
<div class="a t" style="left:-368.6px;width:600px;text-align:right;top:1.1px;font-size:12.2px;line-height:15px;color:#e8e4e5;">0 s</div>
<svg class="a" style="left:259px;top:4px" width="10" height="8"><path d="M1.5 2 L5 5.5 L8.5 2" stroke="#c9c5c6" stroke-width="1.1" fill="none"/></svg>
<div class="a t" style="left:271.1px;top:1.1px;font-size:12.1px;line-height:15px;color:#e8e4e5;">godot.osx.tools.arm64 (14276)</div>
<svg class="a" style="left:443px;top:1px" width="14" height="14"><circle cx="7" cy="7" r="6.2" fill="#f4f4f4"/><path d="M3.8 7 H9.5 M7 4.5 L9.6 7 L7 9.5" stroke="#222" stroke-width="1.5" fill="none"/></svg>
<div class="a t" style="left:-495.6px;width:600px;text-align:right;top:17.1px;font-size:12.2px;line-height:15px;color:#e8e4e5;">4.64 s</div>
<div class="a t" style="left:-451.2px;width:600px;text-align:right;top:17.1px;font-size:12.2px;line-height:15px;color:#e8e4e5;">81.3%</div>
<div class="a t" style="left:-368.6px;width:600px;text-align:right;top:17.1px;font-size:12.2px;line-height:15px;color:#e8e4e5;">0 s</div>
<svg class="a" style="left:270px;top:18px" width="8" height="12"><path d="M1.5 1.5 L6 6 L1.5 10.5" stroke="#c9c5c6" stroke-width="1.1" fill="none"/></svg>
<div class="a t" style="left:280.1px;top:17.1px;font-size:11.9px;line-height:15px;color:#e8e4e5;">Main Thread  0x29ae7</div>
<svg class="a" style="left:405px;top:17px" width="14" height="14"><circle cx="7" cy="7" r="6.2" fill="#8e8b8c"/><path d="M3.8 7 H9.5 M7 4.5 L9.6 7 L7 9.5" stroke="#e0e0e0" stroke-width="1.5" fill="none"/></svg>
<div class="a" style="left:16px;top:32px;width:759px;height:1px;background:#3f3b3c"></div>
<div class="a t" style="left:-491.5px;width:600px;text-align:right;top:33.1px;font-size:12.2px;line-height:15px;color:#e8e4e5;">250.00 ms</div>
<div class="a t" style="left:-451.2px;width:600px;text-align:right;top:33.1px;font-size:12.2px;line-height:15px;color:#e8e4e5;">4.3%</div>
<div class="a t" style="left:-368.6px;width:600px;text-align:right;top:33.1px;font-size:12.2px;line-height:15px;color:#e8e4e5;">0 s</div>
<svg class="a" style="left:270px;top:34px" width="8" height="12"><path d="M1.5 1.5 L6 6 L1.5 10.5" stroke="#c9c5c6" stroke-width="1.1" fill="none"/></svg>
<div class="a t" style="left:280.1px;top:33.1px;font-size:11.9px;line-height:15px;color:#e8e4e5;">_dispatch_workloop_worker_thread  0x29c42</div>
<div class="a" style="left:16px;top:48px;width:759px;height:1px;background:#3f3b3c"></div>
<div class="a t" style="left:-491.5px;width:600px;text-align:right;top:49.1px;font-size:12.2px;line-height:15px;color:#e8e4e5;">169.00 ms</div>
<div class="a t" style="left:-451.2px;width:600px;text-align:right;top:49.1px;font-size:12.2px;line-height:15px;color:#e8e4e5;">2.9%</div>
<div class="a t" style="left:-368.6px;width:600px;text-align:right;top:49.1px;font-size:12.2px;line-height:15px;color:#e8e4e5;">0 s</div>
<svg class="a" style="left:270px;top:50px" width="8" height="12"><path d="M1.5 1.5 L6 6 L1.5 10.5" stroke="#c9c5c6" stroke-width="1.1" fill="none"/></svg>
<div class="a t" style="left:280.1px;top:49.1px;font-size:11.9px;line-height:15px;color:#e8e4e5;">_dispatch_worker_thread2  0x29c43</div>
<div class="a" style="left:16px;top:64px;width:759px;height:1px;background:#3f3b3c"></div>
<div class="a t" style="left:-491.5px;width:600px;text-align:right;top:65.1px;font-size:12.2px;line-height:15px;color:#e8e4e5;">163.00 ms</div>
<div class="a t" style="left:-451.2px;width:600px;text-align:right;top:65.1px;font-size:12.2px;line-height:15px;color:#e8e4e5;">2.8%</div>
<div class="a t" style="left:-368.6px;width:600px;text-align:right;top:65.1px;font-size:12.2px;line-height:15px;color:#e8e4e5;">0 s</div>
<svg class="a" style="left:270px;top:66px" width="8" height="12"><path d="M1.5 1.5 L6 6 L1.5 10.5" stroke="#c9c5c6" stroke-width="1.1" fill="none"/></svg>
<div class="a t" style="left:280.1px;top:65.1px;font-size:11.9px;line-height:15px;color:#e8e4e5;">HALB_IOThread::Entry  0x29ca2</div>
<div class="a" style="left:16px;top:80px;width:759px;height:1px;background:#3f3b3c"></div>
<div class="a t" style="left:-491.5px;width:600px;text-align:right;top:81.1px;font-size:12.2px;line-height:15px;color:#e8e4e5;">145.00 ms</div>
<div class="a t" style="left:-451.2px;width:600px;text-align:right;top:81.1px;font-size:12.2px;line-height:15px;color:#e8e4e5;">2.5%</div>
<div class="a t" style="left:-368.6px;width:600px;text-align:right;top:81.1px;font-size:12.2px;line-height:15px;color:#e8e4e5;">0 s</div>
<svg class="a" style="left:270px;top:82px" width="8" height="12"><path d="M1.5 1.5 L6 6 L1.5 10.5" stroke="#c9c5c6" stroke-width="1.1" fill="none"/></svg>
<div class="a t" style="left:280.1px;top:81.1px;font-size:11.9px;line-height:15px;color:#e8e4e5;">start_wqthread  0x29ce6</div>
<div class="a" style="left:16px;top:96px;width:759px;height:1px;background:#3f3b3c"></div>
<div class="a t" style="left:-491.5px;width:600px;text-align:right;top:97.1px;font-size:12.2px;line-height:15px;color:#e8e4e5;">94.00 ms</div>
<div class="a t" style="left:-451.2px;width:600px;text-align:right;top:97.1px;font-size:12.2px;line-height:15px;color:#e8e4e5;">1.6%</div>
<div class="a t" style="left:-368.6px;width:600px;text-align:right;top:97.1px;font-size:12.2px;line-height:15px;color:#e8e4e5;">0 s</div>
<svg class="a" style="left:270px;top:98px" width="8" height="12"><path d="M1.5 1.5 L6 6 L1.5 10.5" stroke="#c9c5c6" stroke-width="1.1" fill="none"/></svg>
<div class="a t" style="left:280.1px;top:97.1px;font-size:11.9px;line-height:15px;color:#e8e4e5;">_dispatch_worker_thread2  0x29c44</div>
<div class="a" style="left:16px;top:112px;width:759px;height:1px;background:#3f3b3c"></div>
<div class="a t" style="left:-491.5px;width:600px;text-align:right;top:113.1px;font-size:12.2px;line-height:15px;color:#e8e4e5;">31.00 ms</div>
<div class="a t" style="left:-451.2px;width:600px;text-align:right;top:113.1px;font-size:12.2px;line-height:15px;color:#e8e4e5;">0.5%</div>
<div class="a t" style="left:-368.6px;width:600px;text-align:right;top:113.1px;font-size:12.2px;line-height:15px;color:#e8e4e5;">0 s</div>
<svg class="a" style="left:270px;top:114px" width="8" height="12"><path d="M1.5 1.5 L6 6 L1.5 10.5" stroke="#c9c5c6" stroke-width="1.1" fill="none"/></svg>
<div class="a t" style="left:280.1px;top:113.1px;font-size:11.9px;line-height:15px;color:#e8e4e5;">Thread::callback  0x29cdd</div>
<div class="a" style="left:16px;top:128px;width:759px;height:1px;background:#3f3b3c"></div>
<div class="a t" style="left:-491.5px;width:600px;text-align:right;top:129.1px;font-size:12.2px;line-height:15px;color:#e8e4e5;">28.00 ms</div>
<div class="a t" style="left:-451.2px;width:600px;text-align:right;top:129.1px;font-size:12.2px;line-height:15px;color:#e8e4e5;">0.4%</div>
<div class="a t" style="left:-368.6px;width:600px;text-align:right;top:129.1px;font-size:12.2px;line-height:15px;color:#e8e4e5;">0 s</div>
<svg class="a" style="left:270px;top:130px" width="8" height="12"><path d="M1.5 1.5 L6 6 L1.5 10.5" stroke="#c9c5c6" stroke-width="1.1" fill="none"/></svg>
<div class="a t" style="left:280.1px;top:129.1px;font-size:11.9px;line-height:15px;color:#e8e4e5;">Thread::callback  0x29cdc</div>
<div class="a" style="left:16px;top:144px;width:759px;height:1px;background:#3f3b3c"></div>
<div class="a t" style="left:-491.5px;width:600px;text-align:right;top:145.1px;font-size:12.2px;line-height:15px;color:#e8e4e5;">27.00 ms</div>
<div class="a t" style="left:-451.2px;width:600px;text-align:right;top:145.1px;font-size:12.2px;line-height:15px;color:#e8e4e5;">0.4%</div>
<div class="a t" style="left:-368.6px;width:600px;text-align:right;top:145.1px;font-size:12.2px;line-height:15px;color:#e8e4e5;">0 s</div>
<svg class="a" style="left:270px;top:146px" width="8" height="12"><path d="M1.5 1.5 L6 6 L1.5 10.5" stroke="#c9c5c6" stroke-width="1.1" fill="none"/></svg>
<div class="a t" style="left:280.1px;top:145.1px;font-size:11.9px;line-height:15px;color:#e8e4e5;">_NSEventThread  0x29ce5</div>
<div class="a" style="left:16px;top:160px;width:759px;height:1px;background:#3f3b3c"></div>
<div class="a t" style="left:-491.5px;width:600px;text-align:right;top:161.1px;font-size:12.2px;line-height:15px;color:#e8e4e5;">23.00 ms</div>
<div class="a t" style="left:-451.2px;width:600px;text-align:right;top:161.1px;font-size:12.2px;line-height:15px;color:#e8e4e5;">0.4%</div>
<div class="a t" style="left:-368.6px;width:600px;text-align:right;top:161.1px;font-size:12.2px;line-height:15px;color:#e8e4e5;">0 s</div>
<svg class="a" style="left:270px;top:162px" width="8" height="12"><path d="M1.5 1.5 L6 6 L1.5 10.5" stroke="#c9c5c6" stroke-width="1.1" fill="none"/></svg>
<div class="a t" style="left:280.1px;top:161.1px;font-size:11.9px;line-height:15px;color:#e8e4e5;">Thread::callback  0x29ce1</div>
<div class="a" style="left:16px;top:176px;width:759px;height:1px;background:#3f3b3c"></div>
<div class="a t" style="left:-491.5px;width:600px;text-align:right;top:177.1px;font-size:12.2px;line-height:15px;color:#e8e4e5;">23.00 ms</div>
<div class="a t" style="left:-451.2px;width:600px;text-align:right;top:177.1px;font-size:12.2px;line-height:15px;color:#e8e4e5;">0.4%</div>
<div class="a t" style="left:-368.6px;width:600px;text-align:right;top:177.1px;font-size:12.2px;line-height:15px;color:#e8e4e5;">0 s</div>
<svg class="a" style="left:270px;top:178px" width="8" height="12"><path d="M1.5 1.5 L6 6 L1.5 10.5" stroke="#c9c5c6" stroke-width="1.1" fill="none"/></svg>
<div class="a t" style="left:280.1px;top:177.1px;font-size:11.9px;line-height:15px;color:#e8e4e5;">Thread::callback  0x29ce0</div>
<div class="a" style="left:16px;top:192px;width:759px;height:1px;background:#3f3b3c"></div>
<div class="a t" style="left:-491.5px;width:600px;text-align:right;top:193.1px;font-size:12.2px;line-height:15px;color:#e8e4e5;">20.00 ms</div>
<div class="a t" style="left:-451.2px;width:600px;text-align:right;top:193.1px;font-size:12.2px;line-height:15px;color:#e8e4e5;">0.3%</div>
<div class="a t" style="left:-368.6px;width:600px;text-align:right;top:193.1px;font-size:12.2px;line-height:15px;color:#e8e4e5;">0 s</div>
<svg class="a" style="left:270px;top:194px" width="8" height="12"><path d="M1.5 1.5 L6 6 L1.5 10.5" stroke="#c9c5c6" stroke-width="1.1" fill="none"/></svg>
<div class="a t" style="left:280.1px;top:193.1px;font-size:11.9px;line-height:15px;color:#e8e4e5;">Thread::callback  0x29cdf</div>
<div class="a" style="left:16px;top:208px;width:759px;height:1px;background:#3f3b3c"></div>
<div class="a t" style="left:-491.5px;width:600px;text-align:right;top:209.1px;font-size:12.2px;line-height:15px;color:#e8e4e5;">18.00 ms</div>
<div class="a t" style="left:-451.2px;width:600px;text-align:right;top:209.1px;font-size:12.2px;line-height:15px;color:#e8e4e5;">0.3%</div>
<div class="a t" style="left:-368.6px;width:600px;text-align:right;top:209.1px;font-size:12.2px;line-height:15px;color:#e8e4e5;">0 s</div>
<svg class="a" style="left:270px;top:210px" width="8" height="12"><path d="M1.5 1.5 L6 6 L1.5 10.5" stroke="#c9c5c6" stroke-width="1.1" fill="none"/></svg>
<div class="a t" style="left:280.1px;top:209.1px;font-size:11.9px;line-height:15px;color:#e8e4e5;">Thread::callback  0x29cde</div>
<div class="a" style="left:16px;top:224px;width:759px;height:1px;background:#3f3b3c"></div>
<div class="a t" style="left:-491.5px;width:600px;text-align:right;top:225.1px;font-size:12.2px;line-height:15px;color:#e8e4e5;">12.00 ms</div>
<div class="a t" style="left:-451.2px;width:600px;text-align:right;top:225.1px;font-size:12.2px;line-height:15px;color:#e8e4e5;">0.2%</div>
<div class="a t" style="left:-368.6px;width:600px;text-align:right;top:225.1px;font-size:12.2px;line-height:15px;color:#e8e4e5;">0 s</div>
<svg class="a" style="left:270px;top:226px" width="8" height="12"><path d="M1.5 1.5 L6 6 L1.5 10.5" stroke="#c9c5c6" stroke-width="1.1" fill="none"/></svg>
<div class="a t" style="left:280.1px;top:225.1px;font-size:11.9px;line-height:15px;color:#e8e4e5;">Thread::callback  0x29cd4</div>
<div class="a" style="left:16px;top:240px;width:759px;height:1px;background:#3f3b3c"></div>
<div class="a t" style="left:-491.5px;width:600px;text-align:right;top:241.1px;font-size:12.2px;line-height:15px;color:#e8e4e5;">11.00 ms</div>
<div class="a t" style="left:-451.2px;width:600px;text-align:right;top:241.1px;font-size:12.2px;line-height:15px;color:#e8e4e5;">0.1%</div>
<div class="a t" style="left:-368.6px;width:600px;text-align:right;top:241.1px;font-size:12.2px;line-height:15px;color:#e8e4e5;">0 s</div>
<svg class="a" style="left:270px;top:242px" width="8" height="12"><path d="M1.5 1.5 L6 6 L1.5 10.5" stroke="#c9c5c6" stroke-width="1.1" fill="none"/></svg>
<div class="a t" style="left:280.1px;top:241.1px;font-size:11.9px;line-height:15px;color:#e8e4e5;">Thread::callback  0x29ce3</div>
<div class="a" style="left:16px;top:256px;width:759px;height:1px;background:#3f3b3c"></div>
<div class="a t" style="left:-491.5px;width:600px;text-align:right;top:257.1px;font-size:12.2px;line-height:15px;color:#e8e4e5;">9.00 ms</div>
<div class="a t" style="left:-451.2px;width:600px;text-align:right;top:257.1px;font-size:12.2px;line-height:15px;color:#e8e4e5;">0.1%</div>
<div class="a t" style="left:-368.6px;width:600px;text-align:right;top:257.1px;font-size:12.2px;line-height:15px;color:#e8e4e5;">0 s</div>
<svg class="a" style="left:270px;top:258px" width="8" height="12"><path d="M1.5 1.5 L6 6 L1.5 10.5" stroke="#c9c5c6" stroke-width="1.1" fill="none"/></svg>
<div class="a t" style="left:280.1px;top:257.1px;font-size:11.9px;line-height:15px;color:#e8e4e5;">Thread::callback  0x29cd5</div>
<div class="a" style="left:16px;top:272px;width:759px;height:1px;background:#3f3b3c"></div>
<div class="a t" style="left:-491.5px;width:600px;text-align:right;top:273.1px;font-size:12.2px;line-height:15px;color:#e8e4e5;">8.00 ms</div>
<div class="a t" style="left:-451.2px;width:600px;text-align:right;top:273.1px;font-size:12.2px;line-height:15px;color:#e8e4e5;">0.1%</div>
<div class="a t" style="left:-368.6px;width:600px;text-align:right;top:273.1px;font-size:12.2px;line-height:15px;color:#e8e4e5;">0 s</div>
<svg class="a" style="left:270px;top:274px" width="8" height="12"><path d="M1.5 1.5 L6 6 L1.5 10.5" stroke="#c9c5c6" stroke-width="1.1" fill="none"/></svg>
<div class="a t" style="left:280.1px;top:273.1px;font-size:11.9px;line-height:15px;color:#e8e4e5;">Thread::callback  0x29ce2</div>
<div class="a" style="left:16px;top:288px;width:759px;height:1px;background:#3f3b3c"></div>
<div class="a t" style="left:-491.5px;width:600px;text-align:right;top:289.1px;font-size:12.2px;line-height:15px;color:#e8e4e5;">8.00 ms</div>
<div class="a t" style="left:-451.2px;width:600px;text-align:right;top:289.1px;font-size:12.2px;line-height:15px;color:#e8e4e5;">0.1%</div>
<div class="a t" style="left:-368.6px;width:600px;text-align:right;top:289.1px;font-size:12.2px;line-height:15px;color:#e8e4e5;">0 s</div>
<svg class="a" style="left:270px;top:290px" width="8" height="12"><path d="M1.5 1.5 L6 6 L1.5 10.5" stroke="#c9c5c6" stroke-width="1.1" fill="none"/></svg>
<div class="a t" style="left:280.1px;top:289.1px;font-size:11.9px;line-height:15px;color:#e8e4e5;">Thread::callback  0x29cda</div>
<div class="a" style="left:16px;top:304px;width:759px;height:1px;background:#3f3b3c"></div>
<div class="a t" style="left:-491.5px;width:600px;text-align:right;top:305.1px;font-size:12.2px;line-height:15px;color:#e8e4e5;">6.00 ms</div>
<div class="a t" style="left:-451.2px;width:600px;text-align:right;top:305.1px;font-size:12.2px;line-height:15px;color:#e8e4e5;">0.1%</div>
<div class="a t" style="left:-368.6px;width:600px;text-align:right;top:305.1px;font-size:12.2px;line-height:15px;color:#e8e4e5;">0 s</div>
<svg class="a" style="left:270px;top:306px" width="8" height="12"><path d="M1.5 1.5 L6 6 L1.5 10.5" stroke="#c9c5c6" stroke-width="1.1" fill="none"/></svg>
<div class="a t" style="left:280.1px;top:305.1px;font-size:11.9px;line-height:15px;color:#e8e4e5;">Thread::callback  0x29cd6</div>
<div class="a" style="left:16px;top:320px;width:759px;height:1px;background:#3f3b3c"></div>
<div class="a t" style="left:-491.5px;width:600px;text-align:right;top:321.1px;font-size:12.2px;line-height:15px;color:#e8e4e5;">5.00 ms</div>
<div class="a t" style="left:-451.2px;width:600px;text-align:right;top:321.1px;font-size:12.2px;line-height:15px;color:#e8e4e5;">0.0%</div>
<div class="a t" style="left:-368.6px;width:600px;text-align:right;top:321.1px;font-size:12.2px;line-height:15px;color:#e8e4e5;">0 s</div>
<svg class="a" style="left:270px;top:322px" width="8" height="12"><path d="M1.5 1.5 L6 6 L1.5 10.5" stroke="#c9c5c6" stroke-width="1.1" fill="none"/></svg>
<div class="a t" style="left:280.1px;top:321.1px;font-size:11.9px;line-height:15px;color:#e8e4e5;">Thread::callback  0x29cd7</div>
<div class="a" style="left:16px;top:336px;width:759px;height:1px;background:#3f3b3c"></div>
<div class="a t" style="left:-491.5px;width:600px;text-align:right;top:337.1px;font-size:12.2px;line-height:15px;color:#e8e4e5;">4.00 ms</div>
<div class="a t" style="left:-451.2px;width:600px;text-align:right;top:337.1px;font-size:12.2px;line-height:15px;color:#e8e4e5;">0.0%</div>
<div class="a t" style="left:-368.6px;width:600px;text-align:right;top:337.1px;font-size:12.2px;line-height:15px;color:#e8e4e5;">0 s</div>
<svg class="a" style="left:270px;top:338px" width="8" height="12"><path d="M1.5 1.5 L6 6 L1.5 10.5" stroke="#c9c5c6" stroke-width="1.1" fill="none"/></svg>
<div class="a t" style="left:280.1px;top:337.1px;font-size:11.9px;line-height:15px;color:#e8e4e5;">Thread::callback  0x29cdb</div>
<div class="a" style="left:16px;top:352px;width:759px;height:1px;background:#3f3b3c"></div>
<div class="a t" style="left:-491.5px;width:600px;text-align:right;top:353.1px;font-size:12.2px;line-height:15px;color:#e8e4e5;">4.00 ms</div>
<div class="a t" style="left:-451.2px;width:600px;text-align:right;top:353.1px;font-size:12.2px;line-height:15px;color:#e8e4e5;">0.0%</div>
<div class="a t" style="left:-368.6px;width:600px;text-align:right;top:353.1px;font-size:12.2px;line-height:15px;color:#e8e4e5;">0 s</div>
<svg class="a" style="left:270px;top:354px" width="8" height="12"><path d="M1.5 1.5 L6 6 L1.5 10.5" stroke="#c9c5c6" stroke-width="1.1" fill="none"/></svg>
<div class="a t" style="left:280.1px;top:353.1px;font-size:11.9px;line-height:15px;color:#e8e4e5;">Thread::callback  0x29cd8</div>
<div class="a" style="left:260.4px;top:16px;width:8.6px;height:340px;background:#6d6a6b"></div>
</div>
<div class="a" style="left:775px;top:407px;width:15px;height:377px;background:#2c2a2b"></div>
<div class="a" style="left:775px;top:407px;width:1px;height:361px;background:#3a3637"></div>
<div class="a" style="left:779px;top:410px;width:8px;height:300px;background:#6b696a;border-radius:4px"></div>
<div class="a" style="left:1px;top:768px;width:789px;height:15.5px;background:#2c2a2b"></div>
<div class="a" style="left:3px;top:772px;width:756px;height:8px;background:#6b696a;border-radius:4px"></div>
<div class="a" style="left:1px;top:783.5px;width:789px;height:1px;background:#423e3f"></div>
<div class="a" style="left:1px;top:784px;width:789px;height:27px;background:#2a2627"></div>
<div class="a t" style="left:14.200000000000003px;top:790.0px;font-size:11.9px;line-height:15px;color:#b5b1b2;">Input Filter</div>
<div class="a" style="left:85px;top:787px;width:240px;height:21.5px;background:#2e2a2b;border:1px solid #423e3f;border-radius:5px;box-sizing:border-box"></div>
<div class="a" style="left:89.5px;top:791px;width:26px;height:14px;border:1px solid #6e6a6b;border-radius:7px;box-sizing:border-box"></div>
<svg class="a" style="left:94px;top:794px" width="18" height="9"><path d="M0.5 1 H7.5 M1.8 3.5 H6.2 M3 6 H5" stroke="#8a8687" stroke-width="1.2"/><path d="M11 2.5 L13.5 5 L16 2.5" stroke="#8a8687" stroke-width="1.1" fill="none"/></svg>
<div class="a t" style="left:119.30000000000001px;top:790.5px;font-size:11.5px;line-height:14px;color:#6b6768;">Involves Symbol</div>
<div class="a" style="left:332px;top:789px;width:60px;height:19.5px;border:1.5px solid #e9479a;border-radius:4px;box-sizing:border-box"></div>
<div class="a t" style="left:339.2px;top:790.0px;font-size:11.3px;line-height:14px;color:#f0559f;">Call Tree</div>
<div class="a t" style="left:409.6px;top:790.0px;font-size:11.6px;line-height:14px;color:#a8a4a5;">Call Tree Constraints</div>
<div class="a t" style="left:542.8px;top:789.0px;font-size:11.7px;line-height:15px;color:#a8a4a5;">Data Mining</div>
<div class="a" style="left:791px;top:380px;width:361px;height:431px;background:#2a2627"></div>
<div class="a t" style="left:797.2px;top:385.8px;font-size:10.8px;line-height:14px;color:#e4e0e1;font-weight:bold;-webkit-text-stroke:0.1px currentColor;">Heaviest Stack Trace</div>
<svg class="a" style="left:1115px;top:385px" width="16" height="16"><rect x="1.2" y="1.3" width="13" height="3.2" rx="1.6" fill="#a5a3a4" stroke="#e8e6e7" stroke-width="0.9"/><rect x="1.2" y="11.5" width="13" height="3.2" rx="1.6" fill="#a5a3a4" stroke="#e8e6e7" stroke-width="0.9"/><path d="M7.7 4.5 V11.5" stroke="#a5a3a4" stroke-width="2.2"/><rect x="5.6" y="6" width="4.2" height="4" rx="1" fill="#111" stroke="#f0f0f0" stroke-width="1.1"/></svg>
<div class="a" style="left:1137px;top:380px;width:15px;height:431px;background:#2d2a2b"></div>
<div class="a" style="left:1137px;top:380px;width:1px;height:431px;background:#3a3637"></div>
<div class="a" style="left:1141px;top:384px;width:8px;height:294px;background:#6b696a;border-radius:4px"></div>
<div class="a" style="left:791px;top:380px;width:346px;height:431px;overflow:hidden">
<div class="a t" style="left:59px;top:35.6px;font-size:12.1px;line-height:15px;color:#e8e4e5;">5707</div>
<div class="a t" style="left:96px;top:35.6px;font-size:12.17px;line-height:15px;color:#e8e4e5;">godot.osx.tools.arm64 (14276)</div>
<div class="a t" style="left:59px;top:60.6px;font-size:12.1px;line-height:15px;color:#e8e4e5;">4644</div>
<div class="a t" style="left:96px;top:60.6px;font-size:11.81px;line-height:15px;color:#e8e4e5;">Main Thread  0x29ae7</div>
<svg class="a" style="left:38px;top:82.10000000000002px" width="15" height="15"><rect x="0.5" y="0.5" width="14" height="14" fill="#2f2b2c" stroke="#5a5556" stroke-width="1"/><rect x="6.4" y="1.8" width="2.2" height="3" transform="rotate(0 7.5 7)" fill="#bcbaba"/><rect x="6.4" y="1.8" width="2.2" height="3" transform="rotate(45 7.5 7)" fill="#bcbaba"/><rect x="6.4" y="1.8" width="2.2" height="3" transform="rotate(90 7.5 7)" fill="#bcbaba"/><rect x="6.4" y="1.8" width="2.2" height="3" transform="rotate(135 7.5 7)" fill="#bcbaba"/><rect x="6.4" y="1.8" width="2.2" height="3" transform="rotate(180 7.5 7)" fill="#bcbaba"/><rect x="6.4" y="1.8" width="2.2" height="3" transform="rotate(225 7.5 7)" fill="#bcbaba"/><rect x="6.4" y="1.8" width="2.2" height="3" transform="rotate(270 7.5 7)" fill="#bcbaba"/><rect x="6.4" y="1.8" width="2.2" height="3" transform="rotate(315 7.5 7)" fill="#bcbaba"/><circle cx="7.5" cy="7" r="3.6" fill="#bcbaba"/><circle cx="7.5" cy="7" r="1" fill="#111"/></svg>
<div class="a t" style="left:59px;top:85.6px;font-size:12.1px;line-height:15px;color:#8f8b8c;">4030</div>
<div class="a t" style="left:96px;top:84.6px;font-size:12.86px;line-height:16px;color:#8f8b8c;">start</div>
<svg class="a" style="left:38px;top:106.60000000000002px" width="15" height="16"><rect x="0" y="0" width="15" height="16" fill="#1b78ee"/><rect x="1.3" y="1.3" width="12.4" height="13.4" fill="#0b1e58"/><ellipse cx="7.5" cy="5.6" rx="2.5" ry="3" fill="#ffffff"/><path d="M1.8 14.2 Q2 10.6 5.6 10 L6.3 8.4 H8.7 L9.4 10 Q13 10.6 13.2 14.2 Z" fill="#ffffff"/></svg>
<div class="a t" style="left:59px;top:110.6px;font-size:12.1px;line-height:15px;color:#e8e4e5;">4028</div>
<div class="a t" style="left:96px;top:111.1px;font-size:11.53px;line-height:14px;color:#e8e4e5;">main</div>
<svg class="a" style="left:38px;top:131.60000000000002px" width="15" height="16"><rect x="0" y="0" width="15" height="16" fill="#1b78ee"/><rect x="1.3" y="1.3" width="12.4" height="13.4" fill="#0b1e58"/><ellipse cx="7.5" cy="5.6" rx="2.5" ry="3" fill="#ffffff"/><path d="M1.8 14.2 Q2 10.6 5.6 10 L6.3 8.4 H8.7 L9.4 10 Q13 10.6 13.2 14.2 Z" fill="#ffffff"/></svg>
<div class="a t" style="left:59px;top:135.6px;font-size:12.1px;line-height:15px;color:#e8e4e5;">2455</div>
<div class="a t" style="left:96px;top:136.1px;font-size:11.43px;line-height:14px;color:#e8e4e5;">OS_OSX::run()</div>
<svg class="a" style="left:38px;top:156.60000000000002px" width="15" height="16"><rect x="0" y="0" width="15" height="16" fill="#1b78ee"/><rect x="1.3" y="1.3" width="12.4" height="13.4" fill="#0b1e58"/><ellipse cx="7.5" cy="5.6" rx="2.5" ry="3" fill="#ffffff"/><path d="M1.8 14.2 Q2 10.6 5.6 10 L6.3 8.4 H8.7 L9.4 10 Q13 10.6 13.2 14.2 Z" fill="#ffffff"/></svg>
<div class="a t" style="left:59px;top:160.6px;font-size:12.1px;line-height:15px;color:#e8e4e5;">2284</div>
<div class="a t" style="left:96px;top:160.6px;font-size:12.01px;line-height:15px;color:#e8e4e5;">Main::iteration()</div>
<svg class="a" style="left:38px;top:181.60000000000002px" width="15" height="16"><rect x="0" y="0" width="15" height="16" fill="#1b78ee"/><rect x="1.3" y="1.3" width="12.4" height="13.4" fill="#0b1e58"/><ellipse cx="7.5" cy="5.6" rx="2.5" ry="3" fill="#ffffff"/><path d="M1.8 14.2 Q2 10.6 5.6 10 L6.3 8.4 H8.7 L9.4 10 Q13 10.6 13.2 14.2 Z" fill="#ffffff"/></svg>
<div class="a t" style="left:59px;top:185.6px;font-size:12.1px;line-height:15px;color:#e8e4e5;">1907</div>
<div class="a t" style="left:96px;top:186.1px;font-size:11.6px;line-height:14px;color:#e8e4e5;">RenderingServerDefault::draw(bool,…</div>
<svg class="a" style="left:38px;top:206.60000000000002px" width="15" height="16"><rect x="0" y="0" width="15" height="16" fill="#1b78ee"/><rect x="1.3" y="1.3" width="12.4" height="13.4" fill="#0b1e58"/><ellipse cx="7.5" cy="5.6" rx="2.5" ry="3" fill="#ffffff"/><path d="M1.8 14.2 Q2 10.6 5.6 10 L6.3 8.4 H8.7 L9.4 10 Q13 10.6 13.2 14.2 Z" fill="#ffffff"/></svg>
<div class="a t" style="left:59px;top:210.6px;font-size:12.1px;line-height:15px;color:#e8e4e5;">1907</div>
<div class="a t" style="left:96px;top:211.1px;font-size:11.57px;line-height:14px;color:#e8e4e5;">RenderingServerDefault::_draw(bool…</div>
<svg class="a" style="left:38px;top:231.60000000000002px" width="15" height="16"><rect x="0" y="0" width="15" height="16" fill="#1b78ee"/><rect x="1.3" y="1.3" width="12.4" height="13.4" fill="#0b1e58"/><ellipse cx="7.5" cy="5.6" rx="2.5" ry="3" fill="#ffffff"/><path d="M1.8 14.2 Q2 10.6 5.6 10 L6.3 8.4 H8.7 L9.4 10 Q13 10.6 13.2 14.2 Z" fill="#ffffff"/></svg>
<div class="a t" style="left:59px;top:235.6px;font-size:12.1px;line-height:15px;color:#e8e4e5;">1027</div>
<div class="a t" style="left:96px;top:236.1px;font-size:11.52px;line-height:14px;color:#e8e4e5;">RendererCompositorRD::end_frame(…</div>
<svg class="a" style="left:38px;top:256.6px" width="15" height="16"><rect x="0" y="0" width="15" height="16" fill="#1b78ee"/><rect x="1.3" y="1.3" width="12.4" height="13.4" fill="#0b1e58"/><ellipse cx="7.5" cy="5.6" rx="2.5" ry="3" fill="#ffffff"/><path d="M1.8 14.2 Q2 10.6 5.6 10 L6.3 8.4 H8.7 L9.4 10 Q13 10.6 13.2 14.2 Z" fill="#ffffff"/></svg>
<div class="a t" style="left:59px;top:260.6px;font-size:12.1px;line-height:15px;color:#e8e4e5;">1027</div>
<div class="a t" style="left:96px;top:261.1px;font-size:11.52px;line-height:14px;color:#e8e4e5;">RenderingDeviceVulkan::swap_buffe…</div>
<svg class="a" style="left:38px;top:281.6px" width="15" height="16"><rect x="0" y="0" width="15" height="16" fill="#1b78ee"/><rect x="1.3" y="1.3" width="12.4" height="13.4" fill="#0b1e58"/><ellipse cx="7.5" cy="5.6" rx="2.5" ry="3" fill="#ffffff"/><path d="M1.8 14.2 Q2 10.6 5.6 10 L6.3 8.4 H8.7 L9.4 10 Q13 10.6 13.2 14.2 Z" fill="#ffffff"/></svg>
<div class="a t" style="left:59px;top:285.6px;font-size:12.1px;line-height:15px;color:#e8e4e5;">975</div>
<div class="a t" style="left:89.5px;top:285.6px;font-size:11.85px;line-height:15px;color:#e8e4e5;">VulkanContext::swap_buffers()</div>
<svg class="a" style="left:38px;top:306.6px" width="15" height="16"><rect x="0" y="0" width="15" height="16" fill="#1b78ee"/><rect x="1.3" y="1.3" width="12.4" height="13.4" fill="#0b1e58"/><ellipse cx="7.5" cy="5.6" rx="2.5" ry="3" fill="#ffffff"/><path d="M1.8 14.2 Q2 10.6 5.6 10 L6.3 8.4 H8.7 L9.4 10 Q13 10.6 13.2 14.2 Z" fill="#ffffff"/></svg>
<div class="a t" style="left:59px;top:310.6px;font-size:12.1px;line-height:15px;color:#e8e4e5;">932</div>
<div class="a t" style="left:89.5px;top:310.1px;font-size:11.64px;line-height:15px;color:#e8e4e5;">vkQueueSubmit</div>
<svg class="a" style="left:38px;top:331.6px" width="15" height="16"><rect x="0" y="0" width="15" height="16" fill="#2b5590"/><rect x="1.3" y="1.3" width="12.4" height="13.4" fill="#1c2740"/><ellipse cx="7.5" cy="5.6" rx="2.5" ry="3" fill="#a3a3a5"/><path d="M1.8 14.2 Q2 10.6 5.6 10 L6.3 8.4 H8.7 L9.4 10 Q13 10.6 13.2 14.2 Z" fill="#a3a3a5"/></svg>
<div class="a t" style="left:59px;top:335.6px;font-size:12.1px;line-height:15px;color:#8f8b8c;">932</div>
<div class="a t" style="left:89.5px;top:335.1px;font-size:11.64px;line-height:15px;color:#8f8b8c;">vkQueueSubmit</div>
<svg class="a" style="left:38px;top:356.6px" width="15" height="16"><rect x="0" y="0" width="15" height="16" fill="#2b5590"/><rect x="1.3" y="1.3" width="12.4" height="13.4" fill="#1c2740"/><ellipse cx="7.5" cy="5.6" rx="2.5" ry="3" fill="#a3a3a5"/><path d="M1.8 14.2 Q2 10.6 5.6 10 L6.3 8.4 H8.7 L9.4 10 Q13 10.6 13.2 14.2 Z" fill="#a3a3a5"/></svg>
<div class="a t" style="left:59px;top:360.6px;font-size:12.1px;line-height:15px;color:#8f8b8c;">931</div>
<div class="a t" style="left:89.5px;top:361.1px;font-size:11.54px;line-height:14px;color:#8f8b8c;">MVKQueue::submit(unsigned int, VkS…</div>
<svg class="a" style="left:38px;top:381.6px" width="15" height="16"><rect x="0" y="0" width="15" height="16" fill="#2b5590"/><rect x="1.3" y="1.3" width="12.4" height="13.4" fill="#1c2740"/><ellipse cx="7.5" cy="5.6" rx="2.5" ry="3" fill="#a3a3a5"/><path d="M1.8 14.2 Q2 10.6 5.6 10 L6.3 8.4 H8.7 L9.4 10 Q13 10.6 13.2 14.2 Z" fill="#a3a3a5"/></svg>
<div class="a t" style="left:59px;top:385.6px;font-size:12.1px;line-height:15px;color:#8f8b8c;">902</div>
<div class="a t" style="left:89.5px;top:386.1px;font-size:11.41px;line-height:14px;color:#8f8b8c;">MVKQueueCommandBufferSubmissio…</div>
<svg class="a" style="left:38px;top:406.6px" width="15" height="16"><rect x="0" y="0" width="15" height="16" fill="#2b5590"/><rect x="1.3" y="1.3" width="12.4" height="13.4" fill="#1c2740"/><ellipse cx="7.5" cy="5.6" rx="2.5" ry="3" fill="#a3a3a5"/><path d="M1.8 14.2 Q2 10.6 5.6 10 L6.3 8.4 H8.7 L9.4 10 Q13 10.6 13.2 14.2 Z" fill="#a3a3a5"/></svg>
<div class="a t" style="left:59px;top:410.6px;font-size:12.1px;line-height:15px;color:#8f8b8c;">872</div>
<div class="a t" style="left:89.5px;top:411.1px;font-size:11.41px;line-height:14px;color:#8f8b8c;">MVKQueueFullCommandBufferSubmi…</div>
<svg class="a" style="left:38px;top:431.6px" width="15" height="16"><rect x="0" y="0" width="15" height="16" fill="#2b5590"/><rect x="1.3" y="1.3" width="12.4" height="13.4" fill="#1c2740"/><ellipse cx="7.5" cy="5.6" rx="2.5" ry="3" fill="#a3a3a5"/><path d="M1.8 14.2 Q2 10.6 5.6 10 L6.3 8.4 H8.7 L9.4 10 Q13 10.6 13.2 14.2 Z" fill="#a3a3a5"/></svg>
</div>
</div>
<div id="winb"></div>
</body></html>
